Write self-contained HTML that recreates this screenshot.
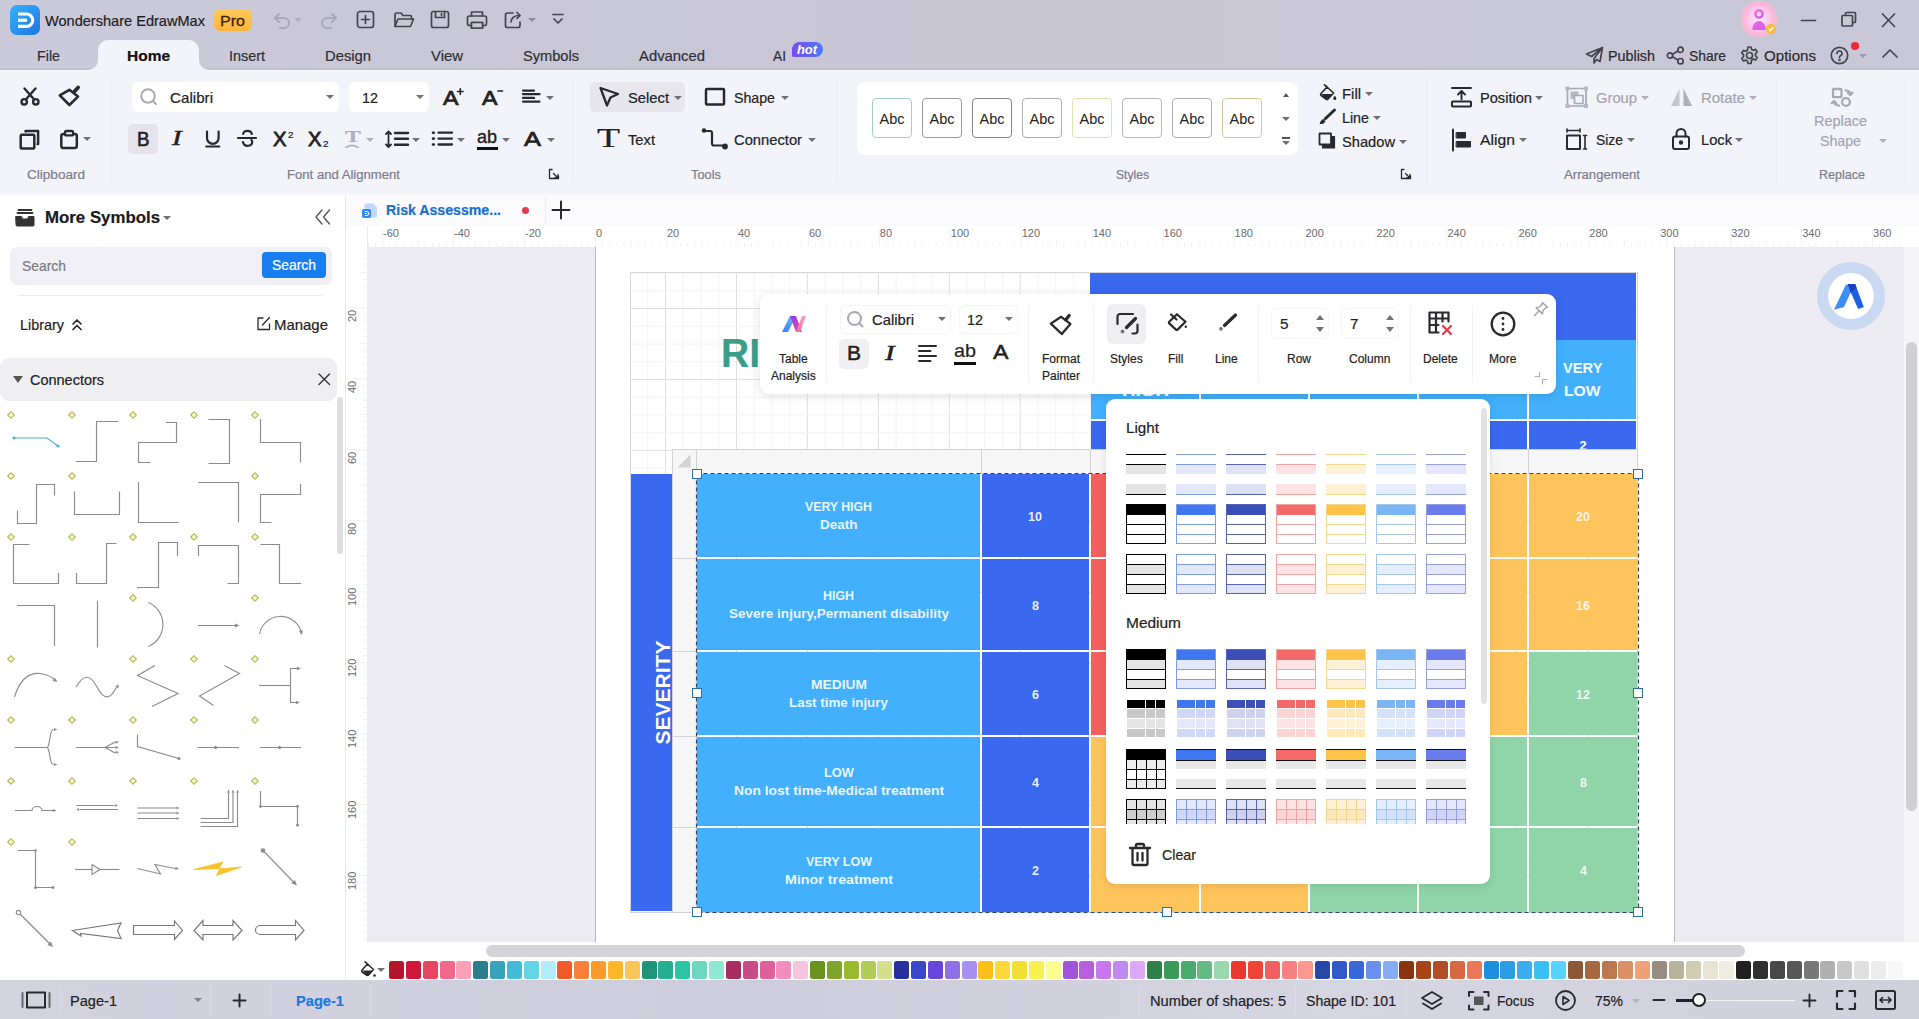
<!DOCTYPE html>
<html lang="en"><head><meta charset="utf-8"><title>Wondershare EdrawMax</title>
<style>
*{box-sizing:border-box;margin:0;padding:0}
html,body{width:1919px;height:1019px;overflow:hidden;background:#fff}
body{font-family:"Liberation Sans",sans-serif;color:#222;position:relative;font-size:15px}
.a{position:absolute}
.t{position:absolute;white-space:nowrap;line-height:1;transform-origin:0 50%;-webkit-text-stroke:0.2px currentColor}
svg{position:absolute;overflow:visible}
.ic{fill:none;stroke:#2a2a2e;stroke-width:2;stroke-linecap:round;stroke-linejoin:round}
.ict{fill:none;stroke:#45454e;stroke-width:1.7;stroke-linecap:round;stroke-linejoin:round}
.icg{fill:none;stroke:#a9a9b6;stroke-width:2;stroke-linecap:round;stroke-linejoin:round}
#titlebar{left:0;top:0;width:1919px;height:70px;background:linear-gradient(90deg,#cbcada 0%,#c8c6d4 45%,#c8c6d3 60%,#c9c8d8 100%)}
#ribbon{left:0;top:70px;width:1919px;height:123px;background:#f3f3fa}
#ribbonline{left:0;top:193px;width:1919px;height:2px;background:#f7f7fb}
#hometab{left:98px;top:40px;width:101px;height:30px;background:#f3f3fa;border-radius:10px 10px 0 0}
.gl{position:absolute;font-size:12.5px;color:#7d7d8a;white-space:nowrap;line-height:1}
.sep{position:absolute;width:1px;background:#e9e9f0}
.dd{position:absolute;width:0;height:0;border-left:4px solid transparent;border-right:4px solid transparent;border-top:4.5px solid #707078}
.ddg{border-top-color:#b0b0bc}
.wbox{position:absolute;background:#fff;border-radius:6px}
.abc{position:absolute;top:98px;width:40px;height:40px;border:1px solid #999;border-radius:4px;background:#fff;font-size:14.5px;text-align:center;line-height:41px;color:#222}
#leftpanel{left:0;top:195px;width:345px;height:786px;background:#fff}
#lpborder{left:345px;top:195px;width:1px;height:786px;background:#e6e6ec}
#doctabs{left:346px;top:195px;width:1573px;height:31px;background:#fbfbfd}
#ruler_h{left:346px;top:226px;width:1558px;height:21px;background:#fff}
#ruler_v{left:346px;top:247px;width:21px;height:694px;background:#fff}
#canvas{left:367px;top:247px;width:1537px;height:695px;background:#ebebf1;overflow:hidden}
#page{left:228px;top:0;width:1080px;height:695px;background:#fff;border-left:1px solid #b8b8c0;border-right:1px solid #b8b8c0}
#vscroll{left:1904px;top:247px;width:15px;height:695px;background:#f5f5f8}
#hscroll{left:346px;top:942px;width:1558px;height:17px;background:#fff}
#palette{left:346px;top:959px;width:1573px;height:21px;background:#fff}
#status{left:0;top:980px;width:1919px;height:39px;background:linear-gradient(90deg,#d3d3e0 0%,#cdcddb 40%,#d6d6e2 70%,#d0d0dd 100%)}
.sw{position:absolute;top:2px;width:15px;height:18px;border-radius:2.5px}
.rl{position:absolute;font-size:11px;color:#6c6c70;line-height:1;white-space:nowrap}
.cell{position:absolute;color:#fff;font-weight:bold;font-size:12.5px;text-align:center;line-height:18px;display:flex;align-items:center;justify-content:center}
.hd{position:absolute;width:10px;height:10px;background:#fff;border:1px solid #2b6ea8}
#ftb{left:760px;top:294px;width:796px;height:100px;background:#fff;border-radius:9px;box-shadow:0 2px 8px rgba(0,0,0,.12)}
#drop{left:1106px;top:399px;width:384px;height:485px;background:#fff;border-radius:9px;box-shadow:0 2px 8px rgba(0,0,0,.10);overflow:hidden}
.fl{position:absolute;font-size:12.5px;color:#222;text-align:center;line-height:17px;white-space:nowrap}
</style></head>
<body>
<div class="a" id="titlebar"></div><div class="a" id="ribbon"></div><div class="a" id="ribbonline"></div><div class="a" style="left:0;top:68px;width:1919px;height:2px;background:rgba(60,60,90,.05)"></div><div class="a" id="hometab"></div>
<svg style="left:88px;top:60px" width="10" height="10"><path d="M10 0V10H0A10 10 0 0 0 10 0Z" fill="#f3f3fa"/></svg>
<svg style="left:199px;top:60px" width="10" height="10"><path d="M0 0V10H10A10 10 0 0 1 0 0Z" fill="#f3f3fa"/></svg>
<div class="a" style="left:10px;top:5px;width:30px;height:30px;border-radius:7px;background:linear-gradient(135deg,#35b4fb,#1c74e6)"></div>
<svg class="" style="left:10px;top:5px" width="30" height="30" viewBox="0 0 30 30"><path d="M8 9H16.5A6.2 6.2 0 0 1 16.5 21.4H8" stroke="#fff" stroke-width="3.2" fill="none"/><path d="M8 15.2H17" stroke="#fff" stroke-width="3.2"/></svg>
<div class="t" style="left:45px;top:13.8px;font-size:14.5px;color:#1e1e24;height:14.5px;transform:scaleX(1.004);">Wondershare EdrawMax</div>
<div class="a" style="left:214px;top:9px;width:38px;height:22px;border-radius:6px;background:linear-gradient(180deg,#ffc95a,#ffb43a)"></div>
<div class="t" style="left:220px;top:12.5px;font-size:15px;color:#3a2508;height:15px;transform:scaleX(1.071);-webkit-text-stroke:0.3px #3a2508;">Pro</div>
<svg class="icg" style="left:272px;top:10px" width="20" height="20" viewBox="0 0 20 20"><path d="M7 4L3 8l4 4"/><path d="M3 8h9a5 5 0 0 1 0 10H8"/></svg>
<div class="dd ddg" style="left:294px;top:18px"></div>
<svg class="icg" style="left:319px;top:10px" width="20" height="20" viewBox="0 0 20 20"><path d="M13 4l4 4-4 4"/><path d="M17 8H8a5 5 0 0 0 0 10h4"/></svg>
<svg class="ict" style="left:356px;top:10px" width="20" height="20" viewBox="0 0 20 20"><rect x="1.5" y="1.5" width="16" height="16" rx="2.5"/><path d="M9.5 5.5v8M5.5 9.5h8"/></svg>
<svg class="ict" style="left:393px;top:10px" width="22" height="20" viewBox="0 0 22 20"><path d="M2 16V4.5A1.5 1.5 0 0 1 3.5 3H8l2 2.5h7A1.5 1.5 0 0 1 18.5 7V9"/><path d="M2 16.5L5 9h15.5l-3 7.5Z"/></svg>
<svg class="ict" style="left:430px;top:10px" width="20" height="20" viewBox="0 0 20 20"><rect x="1.5" y="1.5" width="17" height="16" rx="2"/><path d="M5.5 1.5v6h9v-6M11.5 3.5v2"/></svg>
<svg class="ict" style="left:466px;top:10px" width="22" height="20" viewBox="0 0 22 20"><rect x="1.5" y="6" width="19" height="9.5" rx="2"/><path d="M5.5 6V2h11v4M5.5 12.5h11v5.5h-11Z" /><path d="M5.5 12.5h11v5.5h-11Z" fill="#c9c8d8"/></svg>
<svg class="ict" style="left:503px;top:10px" width="22" height="20" viewBox="0 0 22 20"><path d="M10 3H4.5A2 2 0 0 0 2.5 5v10.5a2 2 0 0 0 2 2H15a2 2 0 0 0 2-2V12"/><path d="M8 12c.500-4 3.5-6.5 8.5-6.5"/><path d="M14 2.5l3 3-3 3"/></svg>
<div class="dd" style="left:528px;top:18px;border-top-color:#8c8c98"></div>
<svg class="ict" style="left:552px;top:13px" width="12" height="14" viewBox="0 0 12 14"><path d="M1 1.5h10"/><path d="M2 6l4 4 4-4"/></svg>
<div class="a" style="left:1741px;top:1px;width:36px;height:36px;border-radius:50%;background:radial-gradient(circle at 50% 50%,#ffeaf7 0%,#fcc4e8 45%,#fab4dc 62%,#f8c8b4 80%,#e6dcc0 92%,rgba(214,214,226,.5) 100%)"></div>
<svg class="" style="left:1741px;top:1px" width="36" height="36" viewBox="0 0 36 36"><defs><linearGradient id="gav" x1="0" y1="0" x2="1" y2="1"><stop offset="0" stop-color="#f66ad8"/><stop offset="1" stop-color="#c95cf0"/></linearGradient></defs><circle cx="18" cy="13" r="3.6" fill="none" stroke="url(#gav)" stroke-width="2.4"/><path d="M11.5 27.5a6.5 7.5 0 0 1 13 0v1.5h-13Z" fill="url(#gav)"/><circle cx="30" cy="28" r="5" fill="#f6bc3a"/><path d="M27.8 28l1.7 1.7 2.8-3.4" stroke="#fff" stroke-width="1.4" fill="none"/></svg>
<svg class="ict" style="left:1799px;top:10px" width="20" height="20" viewBox="0 0 20 20"><path d="M2.5 10.5h14"/></svg>
<svg class="ict" style="left:1840px;top:10px" width="20" height="20" viewBox="0 0 20 20"><rect x="2" y="5.5" width="10.5" height="10.5" rx="1"/><path d="M5.5 5V3.5a1 1 0 0 1 1-1h8a1 1 0 0 1 1 1v8a1 1 0 0 1-1 1h-1.5"/></svg>
<svg class="ict" style="left:1879px;top:10px" width="20" height="20" viewBox="0 0 20 20"><path d="M3.5 4l12 12.5M15.5 4L3.5 16.5"/></svg>
<div class="t" style="left:37px;top:47.5px;font-size:15px;color:#2e2e36;height:15px;transform:scaleX(0.952);">File</div>
<div class="t" style="left:127px;top:47.5px;font-size:15px;color:#111;height:15px;font-weight:bold;transform:scaleX(1.032);">Home</div>
<div class="t" style="left:229px;top:47.5px;font-size:15px;color:#2e2e36;height:15px;transform:scaleX(0.96);">Insert</div>
<div class="t" style="left:325px;top:47.5px;font-size:15px;color:#2e2e36;height:15px;transform:scaleX(0.985);">Design</div>
<div class="t" style="left:431px;top:47.5px;font-size:15px;color:#2e2e36;height:15px;transform:scaleX(0.992);">View</div>
<div class="t" style="left:523px;top:47.5px;font-size:15px;color:#2e2e36;height:15px;transform:scaleX(0.974);">Symbols</div>
<div class="t" style="left:639px;top:47.5px;font-size:15px;color:#2e2e36;height:15px;transform:scaleX(0.989);">Advanced</div>
<div class="t" style="left:773px;top:47.5px;font-size:15px;color:#2e2e36;height:15px;transform:scaleX(0.917);">AI</div>
<div class="a" style="left:792px;top:42px;width:31px;height:15px;border-radius:8px 8px 8px 2px;background:linear-gradient(90deg,#7b4cf2,#4a7af6)"></div>
<div class="t" style="left:797px;top:43.8px;font-size:12.5px;color:#fff;height:12.5px;font-weight:bold;font-style:italic;transform:scaleX(1.029);-webkit-text-stroke:0;">hot</div>
<svg class="ict" style="left:1585px;top:46px" width="19" height="19" viewBox="0 0 19 19"><path d="M17.5 1.5L1.5 8l5 2.5L17.5 1.5L9 12.5v4.5l2.5-3.5 3.5 2Z"/></svg>
<div class="t" style="left:1608px;top:47.5px;font-size:15px;color:#2a2a30;height:15px;transform:scaleX(0.955);">Publish</div>
<svg class="ict" style="left:1666px;top:46px" width="19" height="19" viewBox="0 0 19 19"><circle cx="4" cy="9.5" r="2.7"/><circle cx="14.5" cy="3.8" r="2.7"/><circle cx="14.5" cy="15.2" r="2.7"/><path d="M6.4 8.2l5.7-3.1M6.4 10.8l5.7 3.1"/></svg>
<div class="t" style="left:1689px;top:47.5px;font-size:15px;color:#2a2a30;height:15px;transform:scaleX(0.924);">Share</div>
<svg class="ict" style="left:1740px;top:46px" width="19" height="19" viewBox="0 0 19 19"><circle cx="9.5" cy="9.5" r="3"/><path d="M8 1h3l.600 2.4 1.7.900 2.3-.900 1.6 2.5-1.7 1.8v2l1.7 1.8-1.6 2.5-2.3-.9-1.7.9L11 17.5H8l-.600-2.5-1.7-.900-2.3.900-1.6-2.5 1.7-1.8v-2L1.8 6.9l1.6-2.5 2.3.900 1.7-.900Z"/></svg>
<div class="t" style="left:1764px;top:47.5px;font-size:15px;color:#2a2a30;height:15px;transform:scaleX(1.006);">Options</div>
<svg class="ict" style="left:1830px;top:46px" width="19" height="19" viewBox="0 0 19 19"><circle cx="9.5" cy="9.5" r="8.2"/><path d="M7 7.5a2.5 2.5 0 1 1 3.5 2.3c-.700.3-1 .800-1 1.5"/><circle cx="9.5" cy="13.8" r=".500"/></svg>
<div class="a" style="left:1851px;top:42px;width:7.5px;height:7.5px;border-radius:50%;background:#f0283c"></div>
<div class="dd" style="left:1858.5px;top:54px;border-top-color:#9a9aa8"></div>
<svg class="ict" style="left:1881px;top:48px" width="18" height="12" viewBox="0 0 18 12"><path d="M2 9l7-7 7 7"/></svg>
<div class="sep" style="left:110px;top:80px;height:103px"></div>
<div class="sep" style="left:572px;top:80px;height:103px"></div>
<div class="sep" style="left:836px;top:80px;height:103px"></div>
<div class="sep" style="left:1426px;top:80px;height:103px"></div>
<div class="sep" style="left:1776px;top:80px;height:103px"></div>
<div class="sep" style="left:1905px;top:80px;height:103px"></div>
<div class="t" style="left:27px;top:168.8px;font-size:12.5px;color:#7d7d8a;height:12.5px;transform:scaleX(1.084);">Clipboard</div>
<div class="t" style="left:287px;top:168.8px;font-size:12.5px;color:#7d7d8a;height:12.5px;transform:scaleX(1.049);">Font and Alignment</div>
<div class="t" style="left:691px;top:168.8px;font-size:12.5px;color:#7d7d8a;height:12.5px;transform:scaleX(1.028);">Tools</div>
<div class="t" style="left:1116px;top:168.8px;font-size:12.5px;color:#7d7d8a;height:12.5px;transform:scaleX(0.969);">Styles</div>
<div class="t" style="left:1564px;top:168.8px;font-size:12.5px;color:#7d7d8a;height:12.5px;transform:scaleX(1.052);">Arrangement</div>
<div class="t" style="left:1819px;top:168.8px;font-size:12.5px;color:#7d7d8a;height:12.5px;transform:scaleX(1.003);">Replace</div>
<svg class="ic" style="left:18px;top:85px" width="24" height="24" viewBox="0 0 24 24"><g stroke-width="2.4"><circle cx="6.2" cy="16.8" r="2.7"/><circle cx="17.8" cy="16.8" r="2.7"/><path d="M17.5 3.5L7.8 14.5M6.5 3.5L16.2 14.5"/></g></svg>
<svg class="ic" style="left:56px;top:85px" width="26" height="24" viewBox="0 0 26 24"><path d="M3.8 10.4L13.4 4.8L22 11.6L13.4 20Z" stroke-width="2.6"/><path d="M18.4 6.6l3.7-4.1" stroke-width="3.8"/></svg>
<svg class="ic" style="left:18px;top:127px" width="24" height="24" viewBox="0 0 24 24"><rect x="2.7" y="7.8" width="13.6" height="13.6" rx="1" stroke-width="2.5"/><path d="M7.6 4.5V4H20.1V17H19.6" stroke-width="2.5"/></svg>
<svg class="ic" style="left:58px;top:127px" width="24" height="24" viewBox="0 0 24 24"><rect x="3.3" y="7.1" width="15.5" height="14" rx="2" stroke-width="2.5"/><rect x="7" y="4" width="8.1" height="4.4" rx="1.5" stroke-width="2.3" fill="#f3f3fa"/></svg>
<div class="dd" style="left:83px;top:137px"></div>
<div class="wbox" style="left:132px;top:82px;width:207px;height:30px"></div>
<svg class="icg" style="left:139px;top:87px" width="20" height="20" viewBox="0 0 20 20"><circle cx="9" cy="9" r="6.8"/><path d="M14 14l3 3"/></svg>
<div class="t" style="left:170px;top:89.5px;font-size:15px;color:#222;height:15px;transform:scaleX(1.012);">Calibri</div>
<div class="dd" style="left:325.5px;top:95px"></div>
<div class="wbox" style="left:349px;top:82px;width:80px;height:30px"></div>
<div class="t" style="left:362px;top:89.5px;font-size:15px;color:#222;height:15px;transform:scaleX(0.959);">12</div>
<div class="dd" style="left:415.5px;top:95px"></div>
<div class="t" style="left:442.5px;top:87.5px;font-size:20px;color:#222;height:20px;transform:scaleX(1.162);-webkit-text-stroke:0.7px #222;">A</div>
<svg class="ic" style="left:456px;top:87px" width="8" height="8" viewBox="0 0 8 8"><path d="M4.3 1.8v5.4M1.6 4.5h5.4" stroke-width="1.7"/></svg>
<div class="t" style="left:482px;top:87.5px;font-size:20px;color:#222;height:20px;transform:scaleX(1.162);-webkit-text-stroke:0.7px #222;">A</div>
<svg class="ic" style="left:496px;top:87px" width="8" height="8" viewBox="0 0 8 8"><path d="M2 4h4.5" stroke-width="1.7"/></svg>
<svg class="ic" style="left:521px;top:88px" width="20" height="18" viewBox="0 0 20 18"><path d="M2 2.6h11M2 6.2h16.5M2 9.9h11M2 13.6h16.5" stroke-width="2.3"/></svg>
<div class="dd" style="left:545.5px;top:96px"></div>
<div class="a" style="left:128px;top:124px;width:30px;height:30px;border-radius:5px;background:#e4e4ea"></div>
<div class="t" style="left:136.5px;top:127.5px;font-size:21px;color:#222;height:21px;transform:scaleX(0.892);-webkit-text-stroke:0.6px #222;">B</div>
<div class="t" style="left:172px;top:128px;font-size:21px;color:#222;height:21px;font-style:italic;transform:scaleX(1.371);font-family:'Liberation Serif',serif;-webkit-text-stroke:0.5px #222;">I</div>
<svg class="ic" style="left:203px;top:128px" width="20" height="24" viewBox="0 0 20 24"><path d="M4 3.6v6.4a5.8 5.8 0 0 0 11.6 0V3.6M3.3 18.5h13" stroke-width="2.2"/></svg>
<svg class="ic" style="left:237px;top:128px" width="22" height="24" viewBox="0 0 22 24"><path d="M14.8 6c-.400-2-2-3.2-4.3-3.2-2.6 0-4.3 1.3-4.3 3.2M6 14c.400 2.5 2.2 3.8 4.7 3.8 2.6 0 4.5-1.5 4.5-3.7 0-.900-.300-1.6-.800-2.2M1 10h18" stroke-width="2.2"/></svg>
<div class="t" style="left:273px;top:129px;font-size:20px;color:#222;height:20px;transform:scaleX(1.012);-webkit-text-stroke:0.8px #222;">X</div>
<div class="t" style="left:287.5px;top:130.2px;font-size:9.5px;color:#222;height:9.5px;transform:scaleX(1.041);">2</div>
<div class="t" style="left:308px;top:129px;font-size:20px;color:#222;height:20px;transform:scaleX(1.012);-webkit-text-stroke:0.8px #222;">X</div>
<div class="t" style="left:323px;top:138.6px;font-size:9.5px;color:#222;height:9.5px;transform:scaleX(1.041);">2</div>
<div class="t" style="left:345px;top:127.8px;font-size:17.5px;color:#b0b0bc;height:17.5px;font-weight:bold;transform:scaleX(1.357);font-family:'Liberation Serif',serif;">T</div>
<svg class="" style="left:343px;top:144px" width="18" height="6" viewBox="0 0 18 6"><path d="M2.5 3.8Q9 -1 15.5 3.8" stroke="#b0b0bc" stroke-width="1.7" fill="none"/></svg>
<div class="dd ddg" style="left:366px;top:137.5px"></div>
<svg class="ic" style="left:384px;top:128px" width="26" height="24" viewBox="0 0 26 24"><path d="M4.5 3.5v15.5M2 6L4.5 3.5 7 6M2 16.5L4.5 19 7 16.5" stroke-width="1.8"/><path d="M11 5h13M11 10.8h13M11 16.8h13" stroke-width="2.4"/></svg>
<div class="dd" style="left:411.5px;top:137.5px"></div>
<svg class="ic" style="left:431px;top:129px" width="24" height="22" viewBox="0 0 24 22"><path d="M7.5 3.7h13.5M7.5 9.6h13.5M7.5 15.5h13.5" stroke-width="2.3"/><path d="M2 3.7h.800M2 9.6h.800M2 15.5h.800" stroke-width="2.6"/></svg>
<div class="dd" style="left:456.5px;top:137.5px"></div>
<div class="t" style="left:477px;top:127px;font-size:19px;color:#222;height:19px;transform:scaleX(0.946);-webkit-text-stroke:0.4px #222;">ab</div>
<div class="a" style="left:477px;top:147px;width:21px;height:3px;background:#111"></div>
<div class="dd" style="left:501.5px;top:137.5px"></div>
<div class="t" style="left:523.5px;top:127.5px;font-size:21px;color:#222;height:21px;transform:scaleX(1.214);-webkit-text-stroke:0.7px #222;">A</div>
<div class="dd" style="left:547px;top:137.5px"></div>
<svg class="ic" style="left:548px;top:168px" width="12" height="12" viewBox="0 0 12 12"><path d="M4 1.5H1.5v9h9V8" stroke-width="1.3"/><path d="M5.5 5.5l4.5 4.5M10 6.5v3.5h-3.5" stroke-width="1.3"/></svg>
<div class="a" style="left:590px;top:82px;width:95px;height:30px;border-radius:5px;background:#e6e6ec"></div>
<svg class="ic" style="left:597px;top:85px" width="24" height="24" viewBox="0 0 24 24"><path d="M3.5 3l17.5 6-7.5 3.5L10 20.5Z" stroke-width="2.3"/></svg>
<div class="t" style="left:628px;top:89.5px;font-size:15px;color:#222;height:15px;transform:scaleX(0.983);">Select</div>
<div class="dd" style="left:673.5px;top:95.5px"></div>
<svg class="ic" style="left:704px;top:87px" width="22" height="20" viewBox="0 0 22 20"><rect x="2" y="2" width="18" height="15.5" rx="1" stroke-width="2.5"/></svg>
<div class="t" style="left:734px;top:89.5px;font-size:15px;color:#222;height:15px;transform:scaleX(0.945);">Shape</div>
<div class="dd" style="left:780.5px;top:95.5px"></div>
<div class="t" style="left:597px;top:125px;font-size:27px;color:#222;height:27px;transform:scaleX(1.395);font-family:'Liberation Serif',serif;">T</div>
<div class="t" style="left:628px;top:131.5px;font-size:15px;color:#222;height:15px;transform:scaleX(0.981);">Text</div>
<svg class="ic" style="left:701px;top:127px" width="28" height="24" viewBox="0 0 28 24"><path d="M5.5 4h3.5a2 2 0 0 1 2 2v10.5a2 2 0 0 0 2 2H21" stroke-width="2.2"/><circle cx="3" cy="3.5" r="1.3" fill="#2a2a2e"/><circle cx="24" cy="19.5" r="1.9" fill="#2a2a2e"/></svg>
<div class="t" style="left:734px;top:131.5px;font-size:15px;color:#222;height:15px;transform:scaleX(0.983);">Connector</div>
<div class="dd" style="left:807.5px;top:137.5px"></div>
<div class="wbox" style="left:857px;top:82px;width:441px;height:73px;border-radius:8px"></div>
<div class="abc" style="left:872px;border-color:#a2cfc0">Abc</div>
<div class="abc" style="left:922px;border-color:#9c9c9c">Abc</div>
<div class="abc" style="left:972px;border-color:#868686">Abc</div>
<div class="abc" style="left:1022px;border-color:#acacac">Abc</div>
<div class="abc" style="left:1072px;border-color:#dfe3b4">Abc</div>
<div class="abc" style="left:1122px;border-color:#b8b8b8">Abc</div>
<div class="abc" style="left:1172px;border-color:#acacac">Abc</div>
<div class="abc" style="left:1222px;border-color:#d6c896">Abc</div>
<div class="a" style="left:1282.5px;top:93px;border-left:3.5px solid transparent;border-right:3.5px solid transparent;border-bottom:4.5px solid #555"></div>
<div class="dd" style="left:1282px;top:116.5px"></div>
<div class="a" style="left:1282px;top:137px;width:8px;height:1.5px;background:#555"></div>
<div class="dd" style="left:1282px;top:140.5px"></div>
<svg class="ic" style="left:1318px;top:84px" width="20" height="18" viewBox="0 0 20 18"><path d="M3 9.5l6-6.5 6.5 6-5.5 6a1.5 1.5 0 0 1-2 0L3.2 11.5a1.4 1.4 0 0 1-.200-2ZM9 3L6.5 .800" stroke-width="1.7"/><path d="M3.5 10h11.5l-5 5.5a1.5 1.5 0 0 1-2 0Z" fill="#2a2a2e" stroke="none"/><path d="M16.8 11.5c1 1.5 1.5 2.3 1.5 3a1.5 1.5 0 0 1-3 0c0-.700.5-1.5 1.5-3Z" fill="#2a2a2e" stroke="none"/></svg>
<div class="t" style="left:1342px;top:85.5px;font-size:15px;color:#222;height:15px;transform:scaleX(0.992);">Fill</div>
<div class="dd" style="left:1364.5px;top:91.5px"></div>
<svg class="ic" style="left:1318px;top:108px" width="20" height="18" viewBox="0 0 20 18"><path d="M16.5 2L7.5 10.5" stroke-width="3"/><path d="M5.5 11.5c-2 .300-2.5 2-3.5 4 2 .300 4.5 0 5-2.5Z" fill="#2a2a2e" stroke-width="1"/></svg>
<div class="t" style="left:1342px;top:109.5px;font-size:15px;color:#222;height:15px;transform:scaleX(0.952);">Line</div>
<div class="dd" style="left:1372.5px;top:115.5px"></div>
<svg class="ic" style="left:1318px;top:132px" width="20" height="18" viewBox="0 0 20 18"><rect x="4.5" y="4.5" width="12" height="11.5" fill="#2a2a2e" stroke-width="1.2"/><rect x="1.5" y="1.5" width="11.5" height="11" fill="#f3f3fa" stroke-width="1.8"/></svg>
<div class="t" style="left:1342px;top:133.5px;font-size:15px;color:#222;height:15px;transform:scaleX(0.978);">Shadow</div>
<div class="dd" style="left:1398.5px;top:139.5px"></div>
<svg class="ic" style="left:1400px;top:168px" width="12" height="12" viewBox="0 0 12 12"><path d="M4 1.5H1.5v9h9V8" stroke-width="1.3"/><path d="M5.5 5.5l4.5 4.5M10 6.5v3.5h-3.5" stroke-width="1.3"/></svg>
<svg class="ic" style="left:1450px;top:86px" width="24" height="22" viewBox="0 0 24 22"><path d="M2 2h19" stroke-width="2"/><path d="M11.5 5.5v8M8 8.5l3.5-3.5 3.5 3.5" stroke-width="1.9"/><rect x="2" y="15.5" width="19" height="5" rx=".800" stroke-width="2"/></svg>
<div class="t" style="left:1480px;top:89.5px;font-size:15px;color:#222;height:15px;transform:scaleX(0.974);">Position</div>
<div class="dd" style="left:1534.5px;top:95.5px"></div>
<svg class="icg" style="left:1565px;top:86px" width="24" height="22" viewBox="0 0 24 22"><rect x="2.5" y="2.5" width="18.5" height="17.5" rx="1" stroke-width="1.7"/><rect x="5.5" y="5.5" width="8" height="7.5" fill="#b8b8c4" stroke="none"/><rect x="9.5" y="9.5" width="8.5" height="8" stroke-width="1.6" fill="#f3f3fa"/><rect x=".500" y=".500" width="4" height="4" fill="#b8b8c4" stroke="none"/><rect x="19" y=".500" width="4" height="4" fill="#b8b8c4" stroke="none"/><rect x=".500" y="18" width="4" height="4" fill="#b8b8c4" stroke="none"/><rect x="19" y="18" width="4" height="4" fill="#b8b8c4" stroke="none"/></svg>
<div class="t" style="left:1596px;top:89.5px;font-size:15px;color:#a4a4b0;height:15px;transform:scaleX(0.983);">Group</div>
<div class="dd ddg" style="left:1640.5px;top:95.5px"></div>
<svg class="icg" style="left:1670px;top:86px" width="24" height="22" viewBox="0 0 24 22"><path d="M9.5 2.5v17.5H1Z" fill="#c6c6d0" stroke="none"/><path d="M13.5 2.5v17.5H22Z" fill="#b0b0bc" stroke="none"/></svg>
<div class="t" style="left:1701px;top:89.5px;font-size:15px;color:#a4a4b0;height:15px;transform:scaleX(0.996);">Rotate</div>
<div class="dd ddg" style="left:1748.5px;top:95.5px"></div>
<svg class="ic" style="left:1450px;top:128px" width="24" height="24" viewBox="0 0 24 24"><path d="M3 1.5v21" stroke-width="2"/><rect x="6.5" y="4.5" width="9" height="5.5" fill="#2a2a2e" stroke-width="1"/><rect x="6.5" y="13.5" width="14" height="5.5" fill="#2a2a2e" stroke-width="1"/></svg>
<div class="t" style="left:1480px;top:131.5px;font-size:15px;color:#222;height:15px;transform:scaleX(1.049);">Align</div>
<div class="dd" style="left:1518.5px;top:137.5px"></div>
<svg class="ic" style="left:1565px;top:128px" width="24" height="24" viewBox="0 0 24 24"><rect x="2" y="7.5" width="13" height="13.5" stroke-width="2"/><path d="M2 2.5h13M2 1v3M15 1v3M20 7.5v13.5M18.5 7.5h3M18.5 21h3" stroke-width="1.6"/></svg>
<div class="t" style="left:1596px;top:131.5px;font-size:15px;color:#222;height:15px;transform:scaleX(0.925);">Size</div>
<div class="dd" style="left:1626.5px;top:137.5px"></div>
<svg class="ic" style="left:1670px;top:127px" width="24" height="24" viewBox="0 0 24 24"><rect x="3" y="9.5" width="16" height="12.5" rx="2" stroke-width="2"/><path d="M6.5 9.5V6.5a4.5 4.5 0 0 1 9 0v3" stroke-width="2"/><circle cx="11" cy="15.5" r="1.2" fill="#2a2a2e"/></svg>
<div class="t" style="left:1701px;top:131.5px;font-size:15px;color:#222;height:15px;transform:scaleX(0.978);">Lock</div>
<div class="dd" style="left:1734.5px;top:137.5px"></div>
<svg class="icg" style="left:1830px;top:87px" width="24" height="22" viewBox="0 0 24 22"><g stroke-width="2.3"><rect x="3" y="2" width="8.5" height="8.2" rx=".800"/><circle cx="16" cy="15" r="3.9"/><path d="M15.5 3.3q4.5 .200 5 4.5M18 6l2.5 2 2-2.4"/><path d="M9 18.7q-4.5-.200-5-4.5M1.8 16.2l2.2-2.2 2.3 2"/></g></svg>
<div class="t" style="left:1814px;top:112.5px;font-size:15px;color:#a4a4b0;height:15px;transform:scaleX(0.963);">Replace</div>
<div class="t" style="left:1820px;top:132.5px;font-size:15px;color:#a4a4b0;height:15px;transform:scaleX(0.945);">Shape</div>
<div class="dd ddg" style="left:1878.5px;top:138.5px"></div>
<div class="a" id="leftpanel"></div><div class="a" id="lpborder"></div>
<svg class="ic" style="left:15px;top:208px" width="20" height="20" viewBox="0 0 20 20"><path d="M3.5 2h13M2.5 5h15" stroke-width="1.8" stroke="#333"/><path d="M1 8.5h5.5l1 2.5h5l1-2.5H19V17a1 1 0 0 1-1 1H2a1 1 0 0 1-1-1Z" fill="#333" stroke="#333" stroke-width="1"/></svg>
<div class="t" style="left:45px;top:208.5px;font-size:17px;color:#1a1a1a;height:17px;font-weight:bold;transform:scaleX(0.99);">More Symbols</div>
<div class="dd" style="left:163px;top:215.5px"></div>
<svg class="ic" style="left:314px;top:208px" width="18" height="18" viewBox="0 0 18 18"><path d="M8 2L2 9l6 7M15.5 2l-6 7 6 7" stroke="#555" stroke-width="1.4"/></svg>
<div class="a" style="left:10px;top:247px;width:322px;height:38px;border-radius:7px;background:#f0f0f6"></div>
<div class="t" style="left:22px;top:257.5px;font-size:15px;color:#7a7a84;height:15px;transform:scaleX(0.926);">Search</div>
<div class="a" style="left:262px;top:252px;width:64px;height:26px;border-radius:4px;background:#1a7df0"></div>
<div class="t" style="left:272px;top:257px;font-size:15px;color:#fff;height:15px;transform:scaleX(0.926);">Search</div>
<div class="a" style="left:18px;top:295px;width:304px;height:1px;background:#ececf0"></div>
<div class="t" style="left:20px;top:316.5px;font-size:15px;color:#222;height:15px;transform:scaleX(0.96);">Library</div>
<svg class="ic" style="left:71px;top:318px" width="12" height="13" viewBox="0 0 12 13"><path d="M2 6l4-4 4 4M2 11.5l4-4 4 4" stroke-width="1.7"/></svg>
<svg class="ic" style="left:256px;top:316px" width="15" height="15" viewBox="0 0 15 15"><path d="M7 2H2v11.5h11.5V8" stroke-width="1.3"/><path d="M6.5 9L13.5 1.5" stroke-width="1.3"/></svg>
<div class="t" style="left:274px;top:316.5px;font-size:15px;color:#222;height:15px;transform:scaleX(0.996);">Manage</div>
<div class="a" style="left:0;top:358px;width:337px;height:43px;border-radius:9px;background:#efeff1"></div>
<div class="a" style="left:12.5px;top:375.5px;border-left:5.5px solid transparent;border-right:5.5px solid transparent;border-top:7px solid #555"></div>
<div class="t" style="left:30px;top:371.5px;font-size:15px;color:#222;height:15px;transform:scaleX(0.965);">Connectors</div>
<svg class="ic" style="left:317px;top:372px" width="14" height="14" viewBox="0 0 14 14"><path d="M2 2l10.5 10.5M12.5 2L2 12.5" stroke-width="1.4" stroke="#333"/></svg>
<div class="a" style="left:337px;top:397px;width:6px;height:157px;border-radius:3px;background:#dedee2"></div>
<svg style="left:0;top:195px" width="345" height="786" viewBox="0 195 345 786" fill="none" stroke="#8c8c8c" stroke-width="1.15" stroke-linejoin="miter"><path d="M7.7 415L11 411.7L14.3 415L11 418.3Z" fill="#f6f6c8" stroke="#b4b650" stroke-width="1.1"/><path d="M68.7 415L72 411.7L75.3 415L72 418.3Z" fill="#f6f6c8" stroke="#b4b650" stroke-width="1.1"/><path d="M129.7 415L133 411.7L136.3 415L133 418.3Z" fill="#f6f6c8" stroke="#b4b650" stroke-width="1.1"/><path d="M190.7 415L194 411.7L197.3 415L194 418.3Z" fill="#f6f6c8" stroke="#b4b650" stroke-width="1.1"/><path d="M251.7 415L255 411.7L258.3 415L255 418.3Z" fill="#f6f6c8" stroke="#b4b650" stroke-width="1.1"/><path d="M7.7 476L11 472.7L14.3 476L11 479.3Z" fill="#f6f6c8" stroke="#b4b650" stroke-width="1.1"/><path d="M68.7 476L72 472.7L75.3 476L72 479.3Z" fill="#f6f6c8" stroke="#b4b650" stroke-width="1.1"/><path d="M251.7 476L255 472.7L258.3 476L255 479.3Z" fill="#f6f6c8" stroke="#b4b650" stroke-width="1.1"/><path d="M7.7 537L11 533.7L14.3 537L11 540.3Z" fill="#f6f6c8" stroke="#b4b650" stroke-width="1.1"/><path d="M68.7 537L72 533.7L75.3 537L72 540.3Z" fill="#f6f6c8" stroke="#b4b650" stroke-width="1.1"/><path d="M129.7 537L133 533.7L136.3 537L133 540.3Z" fill="#f6f6c8" stroke="#b4b650" stroke-width="1.1"/><path d="M190.7 537L194 533.7L197.3 537L194 540.3Z" fill="#f6f6c8" stroke="#b4b650" stroke-width="1.1"/><path d="M251.7 537L255 533.7L258.3 537L255 540.3Z" fill="#f6f6c8" stroke="#b4b650" stroke-width="1.1"/><path d="M129.7 598L133 594.7L136.3 598L133 601.3Z" fill="#f6f6c8" stroke="#b4b650" stroke-width="1.1"/><path d="M251.7 598L255 594.7L258.3 598L255 601.3Z" fill="#f6f6c8" stroke="#b4b650" stroke-width="1.1"/><path d="M7.7 659L11 655.7L14.3 659L11 662.3Z" fill="#f6f6c8" stroke="#b4b650" stroke-width="1.1"/><path d="M129.7 659L133 655.7L136.3 659L133 662.3Z" fill="#f6f6c8" stroke="#b4b650" stroke-width="1.1"/><path d="M190.7 659L194 655.7L197.3 659L194 662.3Z" fill="#f6f6c8" stroke="#b4b650" stroke-width="1.1"/><path d="M251.7 659L255 655.7L258.3 659L255 662.3Z" fill="#f6f6c8" stroke="#b4b650" stroke-width="1.1"/><path d="M7.7 720L11 716.7L14.3 720L11 723.3Z" fill="#f6f6c8" stroke="#b4b650" stroke-width="1.1"/><path d="M68.7 720L72 716.7L75.3 720L72 723.3Z" fill="#f6f6c8" stroke="#b4b650" stroke-width="1.1"/><path d="M129.7 720L133 716.7L136.3 720L133 723.3Z" fill="#f6f6c8" stroke="#b4b650" stroke-width="1.1"/><path d="M190.7 720L194 716.7L197.3 720L194 723.3Z" fill="#f6f6c8" stroke="#b4b650" stroke-width="1.1"/><path d="M251.7 720L255 716.7L258.3 720L255 723.3Z" fill="#f6f6c8" stroke="#b4b650" stroke-width="1.1"/><path d="M7.7 781L11 777.7L14.3 781L11 784.3Z" fill="#f6f6c8" stroke="#b4b650" stroke-width="1.1"/><path d="M68.7 781L72 777.7L75.3 781L72 784.3Z" fill="#f6f6c8" stroke="#b4b650" stroke-width="1.1"/><path d="M129.7 781L133 777.7L136.3 781L133 784.3Z" fill="#f6f6c8" stroke="#b4b650" stroke-width="1.1"/><path d="M190.7 781L194 777.7L197.3 781L194 784.3Z" fill="#f6f6c8" stroke="#b4b650" stroke-width="1.1"/><path d="M251.7 781L255 777.7L258.3 781L255 784.3Z" fill="#f6f6c8" stroke="#b4b650" stroke-width="1.1"/><path d="M7.7 842L11 838.7L14.3 842L11 845.3Z" fill="#f6f6c8" stroke="#b4b650" stroke-width="1.1"/><path d="M68.7 842L72 838.7L75.3 842L72 845.3Z" fill="#f6f6c8" stroke="#b4b650" stroke-width="1.1"/><path d="M14 438 L47 438 L58 446" stroke="#4ab0d8"/><circle cx="14" cy="438" r="1.6" fill="#4ab0d8" stroke="none"/><circle cx="58" cy="446" r="1.6" fill="#4ab0d8" stroke="none"/><path d="M76 461.5 L96.5 461.5 L96.5 421.5 L118 421.5" /><path d="M166 422.5 L176.5 422.5 L176.5 442.5 L138.5 442.5 L138.5 462.5 L150.5 462.5" /><path d="M208.5 419.5 L229.5 419.5 L229.5 463.5 L208.5 463.5" /><path d="M260.5 419 L260.5 442.5 L300.5 442.5 L300.5 462.5" /><path d="M17.5 510.5 L17.5 523.5 L36.5 523.5 L36.5 484.5 L54.5 484.5 L54.5 495.5" /><path d="M74.5 491.5 L74.5 514.5 L119.5 514.5 L119.5 491.5" /><path d="M138.5 482 L138.5 522.5 L179 522.5" /><path d="M198.5 482.5 L238.5 482.5 L238.5 522.5" /><path d="M300.5 484 L300.5 494.5 L260.5 494.5 L260.5 522.5 L271.5 522.5" /><path d="M29.5 544.5 L13.5 544.5 L13.5 583.5 L58.5 583.5 L58.5 573" /><path d="M76.5 573 L76.5 583.5 L106.5 583.5 L106.5 543.5 L116.5 543.5" /><path d="M137 587.5 L158.5 587.5 L158.5 542.5 L177.5 542.5 L177.5 556" /><path d="M198.5 556 L198.5 545.5 L238.5 545.5 L238.5 583.5 L227.5 583.5" /><path d="M260.5 544.5 L279.5 544.5 L279.5 583.5 L301 583.5" /><path d="M17 605.5 L54.5 605.5 L54.5 646" /><path d="M97.5 601 L97.5 647.5" /><path d="M148.5 602.5A24 24 0 0 1 148.5 646.5"/><path d="M198 625.5 L236 625.5" /><path d="M239.5 625.5L234.9 627.5L234.9 623.5Z" fill="#8c8c8c" stroke="none"/><path d="M259.5 634A21.5 21.5 0 0 1 301 631"/><path d="M302 635L298.8 631.1L302.8 630.1Z" fill="#8c8c8c" stroke="none"/><path d="M14.5 697Q22 672 40 673.5Q50 675 55 680"/><path d="M57.5 682L52.6 681.1L54.9 677.7Z" fill="#8c8c8c" stroke="none"/><path d="M76 687C84 674 90 674 97 687C104 700 110 700 116 688"/><path d="M118.5 684L118.4 688.5L115.1 686.9Z" fill="#8c8c8c" stroke="none"/><path d="M155 665.5 L137.5 675.5 L178 693.5 L152 706.5" /><path d="M224.5 665.5 L239.5 673.5 L199.5 696 L213.5 705.5" /><path d="M259 685.5 L290.5 685.5" /><path d="M297 668.5 L290.5 668.5 L290.5 702.5 L296 702.5" /><path d="M301 668.5L296.9 670.3L296.9 666.7Z" fill="#8c8c8c" stroke="none"/><path d="M300 702.5L295.9 704.3L295.9 700.7Z" fill="#8c8c8c" stroke="none"/><path d="M14.5 747.5 L47.5 747.5" /><path d="M47.5 747.5C51 742 49 730 53.5 729.5M47.5 747.5C51 753 49 764.5 53.5 764.5"/><path d="M57.5 729.5L53.8 731.1L53.8 727.9Z" fill="#8c8c8c" stroke="none"/><path d="M57.5 764.5L53.8 766.1L53.8 762.9Z" fill="#8c8c8c" stroke="none"/><path d="M76 747.5 L115 747.5" /><path d="M105 747.5 L115 742" /><path d="M105 747.5 L115 753" /><path d="M119 741.5L115.9 744L115 740.9Z" fill="#8c8c8c" stroke="none"/><path d="M119 747.5L115.3 749.1L115.3 745.9Z" fill="#8c8c8c" stroke="none"/><path d="M119 753L115 753.6L115.9 750.5Z" fill="#8c8c8c" stroke="none"/><path d="M137.5 734.5 L137.5 746.5 L179 758.5" /><circle cx="179" cy="758.5" r="1.5" fill="#8c8c8c" stroke="none"/><path d="M197.5 747.5 L239 747.5" /><path d="M219 747.5L214.4 749.5L214.4 745.5Z" fill="#8c8c8c" stroke="none"/><path d="M260 747.5 L301 747.5" /><path d="M283 747.5L278.4 749.5L278.4 745.5Z" fill="#8c8c8c" stroke="none"/><path d="M15 810.5H32A5 4 0 0 1 42 810.5H53"/><path d="M56.5 810.5L52.8 812.1L52.8 808.9Z" fill="#8c8c8c" stroke="none"/><path d="M76.5 805.5 L114 805.5" /><path d="M80 809.5 L118 809.5" /><path d="M118 805.5L114.8 806.9L114.8 804.1Z" fill="#8c8c8c" stroke="none"/><path d="M76 809.5L79.2 808.1L79.2 810.9Z" fill="#8c8c8c" stroke="none"/><path d="M137.5 808 L176 808" /><path d="M179.5 808L176.3 809.4L176.3 806.6Z" fill="#8c8c8c" stroke="none"/><path d="M137.5 813 L176 813" /><path d="M179.5 813L176.3 814.4L176.3 811.6Z" fill="#8c8c8c" stroke="none"/><path d="M137.5 818.5 L176 818.5" /><path d="M179.5 818.5L176.3 819.9L176.3 817.1Z" fill="#8c8c8c" stroke="none"/><path d="M200.5 818.5 L228.5 818.5 L228.5 793" /><path d="M228.5 789.5L229.9 792.7L227.1 792.7Z" fill="#8c8c8c" stroke="none"/><path d="M200.5 822.5 L233 822.5 L233 793" /><path d="M233 789.5L234.4 792.7L231.6 792.7Z" fill="#8c8c8c" stroke="none"/><path d="M200.5 826.5 L237.5 826.5 L237.5 793" /><path d="M237.5 789.5L238.9 792.7L236.1 792.7Z" fill="#8c8c8c" stroke="none"/><path d="M260.5 791 L260.5 806.5 L297.5 806.5 L297.5 825" /><circle cx="260.5" cy="806.5" r="1.4" fill="#8c8c8c" stroke="none"/><circle cx="297.5" cy="806.5" r="1.4" fill="#8c8c8c" stroke="none"/><circle cx="297.5" cy="825" r="1.5" fill="#8c8c8c" stroke="none"/><path d="M18 850.5 L35.5 850.5 L35.5 887.5 L53 887.5" /><circle cx="35.5" cy="850.5" r="1.3" fill="#8c8c8c" stroke="none"/><circle cx="35.5" cy="887.5" r="1.5" fill="#8c8c8c" stroke="none"/><circle cx="53" cy="887.5" r="1.5" fill="#8c8c8c" stroke="none"/><path d="M75 869.5 L92 869.5" /><path d="M100 869.5 L119.5 869.5" /><path d="M92 864.5 L92 874.5 L100 869.5 L92 864.5" /><path d="M137.5 868.5 L160.5 874 L155 864.5 L175.5 868.5" /><path d="M179 869L175.1 870L175.7 866.8Z" fill="#8c8c8c" stroke="none"/><path d="M193.5 869.5L223 862L218.5 869L241.5 867L216.5 875.5L220 868.5Z" fill="#f8c22c" stroke="#f8c22c" stroke-width=".800"/><path d="M263.5 851 L294 882.5" /><circle cx="263" cy="850.5" r="2.3" fill="#8c8c8c" stroke="none"/><path d="M297 885.5L291.4 883.3L295 879.9Z" fill="#8c8c8c" stroke="none"/><path d="M20 914 L50 944" /><circle cx="18.5" cy="912.5" r="2.2" fill="#fff"/><path d="M53 947L47.4 944.9L50.9 941.4Z" fill="#8c8c8c" stroke="none"/><path d="M72.5 930.5L121 923L117.5 930.5L121 938.5L80.5 933.5L81 936Z" fill="#fff" stroke="#777"/><path d="M133.5 925.5H174.5V921L182.5 930.5L174.5 939.5V934.5H133.5Z" fill="#fff" stroke="#777"/><path d="M194 930.5L203 920.5V925.5H233V920.5L242 930.5L233 940V934.5H203V940Z" fill="#fff" stroke="#777"/><path d="M260 925.5H295.5V920.5L304 930.5L295.5 940V934.5H260A4.5 4.5 0 0 1 260 925.5Z" fill="#fff" stroke="#777"/></svg>
<div class="a" id="doctabs"></div>
<svg class="" style="left:361px;top:202px" width="18" height="18" viewBox="0 0 18 18"><path d="M5 1.5h7l4 4V14a1.5 1.5 0 0 1-1.5 1.5H5A1.5 1.5 0 0 1 3.5 14V3A1.5 1.5 0 0 1 5 1.5Z" fill="#c4d6fa" stroke="none"/><rect x="1" y="7" width="9" height="9" rx="2" fill="#2e8af5" stroke="none"/><path d="M3.8 9.5h2a2 2 0 0 1 0 4h-2M3.8 11.5H6" stroke="#fff" stroke-width="1" fill="none"/></svg>
<div class="t" style="left:386px;top:202.8px;font-size:14.5px;color:#1a6ed2;height:14.5px;font-weight:bold;transform:scaleX(0.975);">Risk Assessme...</div>
<div class="a" style="left:521.5px;top:207px;width:7px;height:7px;border-radius:50%;background:#e8364c"></div>
<div class="a" style="left:545px;top:196px;width:1px;height:29px;background:#ececf2"></div>
<svg class="ic" style="left:551px;top:200px" width="20" height="20" viewBox="0 0 20 20"><path d="M10 1.5v17M1.5 10h17" stroke-width="2"/></svg>
<div class="a" id="ruler_h"></div><div class="a" id="ruler_v"></div>
<svg style="left:346px;top:226px" width="1558" height="21" viewBox="346 226 1558 21" stroke="#f2f2f6" stroke-width="1"><path d="M368.5 243V247"/><path d="M375.6 243V247"/><path d="M382.6 229V247"/><path d="M389.7 243V247"/><path d="M396.8 243V247"/><path d="M403.9 243V247"/><path d="M411 243V247"/><path d="M418.1 240V247"/><path d="M425.2 243V247"/><path d="M432.3 243V247"/><path d="M439.4 243V247"/><path d="M446.5 243V247"/><path d="M453.6 229V247"/><path d="M460.7 243V247"/><path d="M467.8 243V247"/><path d="M474.9 243V247"/><path d="M482 243V247"/><path d="M489.1 240V247"/><path d="M496.2 243V247"/><path d="M503.3 243V247"/><path d="M510.4 243V247"/><path d="M517.5 243V247"/><path d="M524.5 229V247"/><path d="M531.6 243V247"/><path d="M538.7 243V247"/><path d="M545.8 243V247"/><path d="M552.9 243V247"/><path d="M560 240V247"/><path d="M567.1 243V247"/><path d="M574.2 243V247"/><path d="M581.3 243V247"/><path d="M588.4 243V247"/><path d="M595.5 229V247"/><path d="M602.6 243V247"/><path d="M609.7 243V247"/><path d="M616.8 243V247"/><path d="M623.9 243V247"/><path d="M631 240V247"/><path d="M638.1 243V247"/><path d="M645.2 243V247"/><path d="M652.3 243V247"/><path d="M659.4 243V247"/><path d="M666.5 229V247"/><path d="M673.5 243V247"/><path d="M680.6 243V247"/><path d="M687.7 243V247"/><path d="M694.8 243V247"/><path d="M701.9 240V247"/><path d="M709 243V247"/><path d="M716.1 243V247"/><path d="M723.2 243V247"/><path d="M730.3 243V247"/><path d="M737.4 229V247"/><path d="M744.5 243V247"/><path d="M751.6 243V247"/><path d="M758.7 243V247"/><path d="M765.8 243V247"/><path d="M772.9 240V247"/><path d="M780 243V247"/><path d="M787.1 243V247"/><path d="M794.2 243V247"/><path d="M801.3 243V247"/><path d="M808.4 229V247"/><path d="M815.4 243V247"/><path d="M822.5 243V247"/><path d="M829.6 243V247"/><path d="M836.7 243V247"/><path d="M843.8 240V247"/><path d="M850.9 243V247"/><path d="M858 243V247"/><path d="M865.1 243V247"/><path d="M872.2 243V247"/><path d="M879.3 229V247"/><path d="M886.4 243V247"/><path d="M893.5 243V247"/><path d="M900.6 243V247"/><path d="M907.7 243V247"/><path d="M914.8 240V247"/><path d="M921.9 243V247"/><path d="M929 243V247"/><path d="M936.1 243V247"/><path d="M943.2 243V247"/><path d="M950.2 229V247"/><path d="M957.3 243V247"/><path d="M964.4 243V247"/><path d="M971.5 243V247"/><path d="M978.6 243V247"/><path d="M985.7 240V247"/><path d="M992.8 243V247"/><path d="M999.9 243V247"/><path d="M1007 243V247"/><path d="M1014.1 243V247"/><path d="M1021.2 229V247"/><path d="M1028.3 243V247"/><path d="M1035.4 243V247"/><path d="M1042.5 243V247"/><path d="M1049.6 243V247"/><path d="M1056.7 240V247"/><path d="M1063.8 243V247"/><path d="M1070.9 243V247"/><path d="M1078 243V247"/><path d="M1085.1 243V247"/><path d="M1092.2 229V247"/><path d="M1099.2 243V247"/><path d="M1106.3 243V247"/><path d="M1113.4 243V247"/><path d="M1120.5 243V247"/><path d="M1127.6 240V247"/><path d="M1134.7 243V247"/><path d="M1141.8 243V247"/><path d="M1148.9 243V247"/><path d="M1156 243V247"/><path d="M1163.1 229V247"/><path d="M1170.2 243V247"/><path d="M1177.3 243V247"/><path d="M1184.4 243V247"/><path d="M1191.5 243V247"/><path d="M1198.6 240V247"/><path d="M1205.7 243V247"/><path d="M1212.8 243V247"/><path d="M1219.9 243V247"/><path d="M1227 243V247"/><path d="M1234.1 229V247"/><path d="M1241.1 243V247"/><path d="M1248.2 243V247"/><path d="M1255.3 243V247"/><path d="M1262.4 243V247"/><path d="M1269.5 240V247"/><path d="M1276.6 243V247"/><path d="M1283.7 243V247"/><path d="M1290.8 243V247"/><path d="M1297.9 243V247"/><path d="M1305 229V247"/><path d="M1312.1 243V247"/><path d="M1319.2 243V247"/><path d="M1326.3 243V247"/><path d="M1333.4 243V247"/><path d="M1340.5 240V247"/><path d="M1347.6 243V247"/><path d="M1354.7 243V247"/><path d="M1361.8 243V247"/><path d="M1368.9 243V247"/><path d="M1376 229V247"/><path d="M1383 243V247"/><path d="M1390.1 243V247"/><path d="M1397.2 243V247"/><path d="M1404.3 243V247"/><path d="M1411.4 240V247"/><path d="M1418.5 243V247"/><path d="M1425.6 243V247"/><path d="M1432.7 243V247"/><path d="M1439.8 243V247"/><path d="M1446.9 229V247"/><path d="M1454 243V247"/><path d="M1461.1 243V247"/><path d="M1468.2 243V247"/><path d="M1475.3 243V247"/><path d="M1482.4 240V247"/><path d="M1489.5 243V247"/><path d="M1496.6 243V247"/><path d="M1503.7 243V247"/><path d="M1510.8 243V247"/><path d="M1517.9 229V247"/><path d="M1524.9 243V247"/><path d="M1532 243V247"/><path d="M1539.1 243V247"/><path d="M1546.2 243V247"/><path d="M1553.3 240V247"/><path d="M1560.4 243V247"/><path d="M1567.5 243V247"/><path d="M1574.6 243V247"/><path d="M1581.7 243V247"/><path d="M1588.8 229V247"/><path d="M1595.9 243V247"/><path d="M1603 243V247"/><path d="M1610.1 243V247"/><path d="M1617.2 243V247"/><path d="M1624.3 240V247"/><path d="M1631.4 243V247"/><path d="M1638.5 243V247"/><path d="M1645.6 243V247"/><path d="M1652.7 243V247"/><path d="M1659.8 229V247"/><path d="M1666.8 243V247"/><path d="M1673.9 243V247"/><path d="M1681 243V247"/><path d="M1688.1 243V247"/><path d="M1695.2 240V247"/><path d="M1702.3 243V247"/><path d="M1709.4 243V247"/><path d="M1716.5 243V247"/><path d="M1723.6 243V247"/><path d="M1730.7 229V247"/><path d="M1737.8 243V247"/><path d="M1744.9 243V247"/><path d="M1752 243V247"/><path d="M1759.1 243V247"/><path d="M1766.2 240V247"/><path d="M1773.3 243V247"/><path d="M1780.4 243V247"/><path d="M1787.5 243V247"/><path d="M1794.6 243V247"/><path d="M1801.7 229V247"/><path d="M1808.7 243V247"/><path d="M1815.8 243V247"/><path d="M1822.9 243V247"/><path d="M1830 243V247"/><path d="M1837.1 240V247"/><path d="M1844.2 243V247"/><path d="M1851.3 243V247"/><path d="M1858.4 243V247"/><path d="M1865.5 243V247"/><path d="M1872.6 229V247"/><path d="M1879.7 243V247"/><path d="M1886.8 243V247"/><path d="M1893.9 243V247"/><path d="M1901 243V247"/><path d="M367.5 226V247" stroke="#e8e8ee"/></svg>
<div class="rl" style="left:383.1px;top:228px">-60</div>
<div class="rl" style="left:454.1px;top:228px">-40</div>
<div class="rl" style="left:525px;top:228px">-20</div>
<div class="rl" style="left:596px;top:228px">0</div>
<div class="rl" style="left:667px;top:228px">20</div>
<div class="rl" style="left:737.9px;top:228px">40</div>
<div class="rl" style="left:808.9px;top:228px">60</div>
<div class="rl" style="left:879.8px;top:228px">80</div>
<div class="rl" style="left:950.8px;top:228px">100</div>
<div class="rl" style="left:1021.7px;top:228px">120</div>
<div class="rl" style="left:1092.7px;top:228px">140</div>
<div class="rl" style="left:1163.6px;top:228px">160</div>
<div class="rl" style="left:1234.6px;top:228px">180</div>
<div class="rl" style="left:1305.5px;top:228px">200</div>
<div class="rl" style="left:1376.5px;top:228px">220</div>
<div class="rl" style="left:1447.4px;top:228px">240</div>
<div class="rl" style="left:1518.4px;top:228px">260</div>
<div class="rl" style="left:1589.3px;top:228px">280</div>
<div class="rl" style="left:1660.2px;top:228px">300</div>
<div class="rl" style="left:1731.2px;top:228px">320</div>
<div class="rl" style="left:1802.2px;top:228px">340</div>
<div class="rl" style="left:1873.1px;top:228px">360</div>
<svg style="left:346px;top:247px" width="21" height="694" viewBox="346 247 21 694" stroke="#f2f2f6" stroke-width="1"><path d="M363 251.2H367"/><path d="M363 258.3H367"/><path d="M363 265.4H367"/><path d="M360 272.5H367"/><path d="M363 279.6H367"/><path d="M363 286.7H367"/><path d="M363 293.8H367"/><path d="M363 300.9H367"/><path d="M349 307.9H367"/><path d="M363 315H367"/><path d="M363 322.1H367"/><path d="M363 329.2H367"/><path d="M363 336.3H367"/><path d="M360 343.4H367"/><path d="M363 350.5H367"/><path d="M363 357.6H367"/><path d="M363 364.7H367"/><path d="M363 371.8H367"/><path d="M349 378.9H367"/><path d="M363 386H367"/><path d="M363 393.1H367"/><path d="M363 400.2H367"/><path d="M363 407.3H367"/><path d="M360 414.4H367"/><path d="M363 421.5H367"/><path d="M363 428.6H367"/><path d="M363 435.7H367"/><path d="M363 442.8H367"/><path d="M349 449.9H367"/><path d="M363 456.9H367"/><path d="M363 464H367"/><path d="M363 471.1H367"/><path d="M363 478.2H367"/><path d="M360 485.3H367"/><path d="M363 492.4H367"/><path d="M363 499.5H367"/><path d="M363 506.6H367"/><path d="M363 513.7H367"/><path d="M349 520.8H367"/><path d="M363 527.9H367"/><path d="M363 535H367"/><path d="M363 542.1H367"/><path d="M363 549.2H367"/><path d="M360 556.3H367"/><path d="M363 563.4H367"/><path d="M363 570.5H367"/><path d="M363 577.6H367"/><path d="M363 584.7H367"/><path d="M349 591.8H367"/><path d="M363 598.8H367"/><path d="M363 605.9H367"/><path d="M363 613H367"/><path d="M363 620.1H367"/><path d="M360 627.2H367"/><path d="M363 634.3H367"/><path d="M363 641.4H367"/><path d="M363 648.5H367"/><path d="M363 655.6H367"/><path d="M349 662.7H367"/><path d="M363 669.8H367"/><path d="M363 676.9H367"/><path d="M363 684H367"/><path d="M363 691.1H367"/><path d="M360 698.2H367"/><path d="M363 705.3H367"/><path d="M363 712.4H367"/><path d="M363 719.5H367"/><path d="M363 726.6H367"/><path d="M349 733.7H367"/><path d="M363 740.7H367"/><path d="M363 747.8H367"/><path d="M363 754.9H367"/><path d="M363 762H367"/><path d="M360 769.1H367"/><path d="M363 776.2H367"/><path d="M363 783.3H367"/><path d="M363 790.4H367"/><path d="M363 797.5H367"/><path d="M349 804.6H367"/><path d="M363 811.7H367"/><path d="M363 818.8H367"/><path d="M363 825.9H367"/><path d="M363 833H367"/><path d="M360 840.1H367"/><path d="M363 847.2H367"/><path d="M363 854.3H367"/><path d="M363 861.4H367"/><path d="M363 868.5H367"/><path d="M349 875.6H367"/><path d="M363 882.6H367"/><path d="M363 889.7H367"/><path d="M363 896.8H367"/><path d="M363 903.9H367"/><path d="M360 911H367"/><path d="M363 918.1H367"/><path d="M363 925.2H367"/><path d="M363 932.3H367"/><path d="M363 939.4H367"/></svg>
<div class="rl" style="left:347px;top:322.4px;width:11.5px;height:11.5px;transform-origin:0 0;transform:rotate(-90deg)">20</div>
<div class="rl" style="left:347px;top:393.4px;width:11.5px;height:11.5px;transform-origin:0 0;transform:rotate(-90deg)">40</div>
<div class="rl" style="left:347px;top:464.4px;width:11.5px;height:11.5px;transform-origin:0 0;transform:rotate(-90deg)">60</div>
<div class="rl" style="left:347px;top:535.3px;width:11.5px;height:11.5px;transform-origin:0 0;transform:rotate(-90deg)">80</div>
<div class="rl" style="left:347px;top:606.2px;width:11.5px;height:11.5px;transform-origin:0 0;transform:rotate(-90deg)">100</div>
<div class="rl" style="left:347px;top:677.2px;width:11.5px;height:11.5px;transform-origin:0 0;transform:rotate(-90deg)">120</div>
<div class="rl" style="left:347px;top:748.2px;width:11.5px;height:11.5px;transform-origin:0 0;transform:rotate(-90deg)">140</div>
<div class="rl" style="left:347px;top:819.1px;width:11.5px;height:11.5px;transform-origin:0 0;transform:rotate(-90deg)">160</div>
<div class="rl" style="left:347px;top:890.1px;width:11.5px;height:11.5px;transform-origin:0 0;transform:rotate(-90deg)">180</div>
<div class="a" id="canvas"><div class="a" id="page"></div></div>
<svg style="left:630px;top:272px" width="1008" height="641" viewBox="630 272 1008 641" fill="none"><rect x="630" y="272" width="1008" height="641" fill="#fff"/><path d="M647.8 272V913" stroke="#f4f4f7"/><path d="M665.5 272V913" stroke="#dedee2"/><path d="M683.2 272V913" stroke="#f4f4f7"/><path d="M701 272V913" stroke="#f4f4f7"/><path d="M718.7 272V913" stroke="#f4f4f7"/><path d="M736.5 272V913" stroke="#dedee2"/><path d="M754.2 272V913" stroke="#f4f4f7"/><path d="M771.9 272V913" stroke="#f4f4f7"/><path d="M789.7 272V913" stroke="#f4f4f7"/><path d="M807.4 272V913" stroke="#dedee2"/><path d="M825.1 272V913" stroke="#f4f4f7"/><path d="M842.9 272V913" stroke="#f4f4f7"/><path d="M860.6 272V913" stroke="#f4f4f7"/><path d="M878.4 272V913" stroke="#dedee2"/><path d="M896.1 272V913" stroke="#f4f4f7"/><path d="M913.8 272V913" stroke="#f4f4f7"/><path d="M931.6 272V913" stroke="#f4f4f7"/><path d="M949.3 272V913" stroke="#dedee2"/><path d="M967 272V913" stroke="#f4f4f7"/><path d="M984.8 272V913" stroke="#f4f4f7"/><path d="M1002.5 272V913" stroke="#f4f4f7"/><path d="M1020.2 272V913" stroke="#dedee2"/><path d="M1038 272V913" stroke="#f4f4f7"/><path d="M1055.7 272V913" stroke="#f4f4f7"/><path d="M1073.5 272V913" stroke="#f4f4f7"/><path d="M1091.2 272V913" stroke="#dedee2"/><path d="M1108.9 272V913" stroke="#f4f4f7"/><path d="M1126.7 272V913" stroke="#f4f4f7"/><path d="M1144.4 272V913" stroke="#f4f4f7"/><path d="M1162.2 272V913" stroke="#dedee2"/><path d="M1179.9 272V913" stroke="#f4f4f7"/><path d="M1197.6 272V913" stroke="#f4f4f7"/><path d="M1215.4 272V913" stroke="#f4f4f7"/><path d="M1233.1 272V913" stroke="#dedee2"/><path d="M1250.8 272V913" stroke="#f4f4f7"/><path d="M1268.6 272V913" stroke="#f4f4f7"/><path d="M1286.3 272V913" stroke="#f4f4f7"/><path d="M1304.1 272V913" stroke="#dedee2"/><path d="M1321.8 272V913" stroke="#f4f4f7"/><path d="M1339.5 272V913" stroke="#f4f4f7"/><path d="M1357.3 272V913" stroke="#f4f4f7"/><path d="M1375 272V913" stroke="#dedee2"/><path d="M1392.7 272V913" stroke="#f4f4f7"/><path d="M1410.5 272V913" stroke="#f4f4f7"/><path d="M1428.2 272V913" stroke="#f4f4f7"/><path d="M1446 272V913" stroke="#dedee2"/><path d="M1463.7 272V913" stroke="#f4f4f7"/><path d="M1481.4 272V913" stroke="#f4f4f7"/><path d="M1499.2 272V913" stroke="#f4f4f7"/><path d="M1516.9 272V913" stroke="#dedee2"/><path d="M1534.6 272V913" stroke="#f4f4f7"/><path d="M1552.4 272V913" stroke="#f4f4f7"/><path d="M1570.1 272V913" stroke="#f4f4f7"/><path d="M1587.8 272V913" stroke="#dedee2"/><path d="M1605.6 272V913" stroke="#f4f4f7"/><path d="M1623.3 272V913" stroke="#f4f4f7"/><path d="M630 273H1638" stroke="#f4f4f7"/><path d="M630 290.8H1638" stroke="#f4f4f7"/><path d="M630 308.5H1638" stroke="#dedee2"/><path d="M630 326.2H1638" stroke="#f4f4f7"/><path d="M630 344H1638" stroke="#f4f4f7"/><path d="M630 361.7H1638" stroke="#f4f4f7"/><path d="M630 379.4H1638" stroke="#dedee2"/><path d="M630 397.2H1638" stroke="#f4f4f7"/><path d="M630 414.9H1638" stroke="#f4f4f7"/><path d="M630 432.7H1638" stroke="#f4f4f7"/><path d="M630 450.4H1638" stroke="#dedee2"/><path d="M630 468.1H1638" stroke="#f4f4f7"/><path d="M630 485.9H1638" stroke="#f4f4f7"/><path d="M630 503.6H1638" stroke="#f4f4f7"/><path d="M630 521.4H1638" stroke="#dedee2"/><path d="M630 539.1H1638" stroke="#f4f4f7"/><path d="M630 556.8H1638" stroke="#f4f4f7"/><path d="M630 574.6H1638" stroke="#f4f4f7"/><path d="M630 592.3H1638" stroke="#dedee2"/><path d="M630 610H1638" stroke="#f4f4f7"/><path d="M630 627.8H1638" stroke="#f4f4f7"/><path d="M630 645.5H1638" stroke="#f4f4f7"/><path d="M630 663.2H1638" stroke="#dedee2"/><path d="M630 681H1638" stroke="#f4f4f7"/><path d="M630 698.7H1638" stroke="#f4f4f7"/><path d="M630 716.5H1638" stroke="#f4f4f7"/><path d="M630 734.2H1638" stroke="#dedee2"/><path d="M630 751.9H1638" stroke="#f4f4f7"/><path d="M630 769.7H1638" stroke="#f4f4f7"/><path d="M630 787.4H1638" stroke="#f4f4f7"/><path d="M630 805.2H1638" stroke="#dedee2"/><path d="M630 822.9H1638" stroke="#f4f4f7"/><path d="M630 840.6H1638" stroke="#f4f4f7"/><path d="M630 858.4H1638" stroke="#f4f4f7"/><path d="M630 876.1H1638" stroke="#dedee2"/><path d="M630 893.8H1638" stroke="#f4f4f7"/><path d="M630 911.6H1638" stroke="#f4f4f7"/><rect x="630.5" y="272.5" width="1007" height="640" stroke="#d4d4da"/></svg>
<div class="t" style="left:721px;top:332.5px;font-size:41px;color:#3c9d8b;height:41px;font-weight:bold;transform:scaleX(0.951);">RI</div>
<div class="a" style="left:1090px;top:273px;width:545.5px;height:67px;background:#3a68ef"></div>
<div class="a" style="left:1091px;top:340px;width:108px;height:79px;background:#42b0fd"></div>
<div class="a" style="left:1091px;top:421px;width:108px;height:28px;background:#3a68ef"></div>
<div class="a" style="left:1201px;top:340px;width:107px;height:79px;background:#42b0fd"></div>
<div class="a" style="left:1201px;top:421px;width:107px;height:28px;background:#3a68ef"></div>
<div class="a" style="left:1310px;top:340px;width:107px;height:79px;background:#42b0fd"></div>
<div class="a" style="left:1310px;top:421px;width:107px;height:28px;background:#3a68ef"></div>
<div class="a" style="left:1419px;top:340px;width:108px;height:79px;background:#42b0fd"></div>
<div class="a" style="left:1419px;top:421px;width:108px;height:28px;background:#3a68ef"></div>
<div class="a" style="left:1529px;top:340px;width:106.5px;height:79px;background:#42b0fd"></div>
<div class="a" style="left:1529px;top:421px;width:106.5px;height:28px;background:#3a68ef"></div>
<div class="t" style="left:1563.25px;top:360.1px;font-size:15.5px;color:#f2fbff;height:15.5px;font-weight:bold;transform:scaleX(0.949);-webkit-text-stroke:0;">VERY</div>
<div class="t" style="left:1563.75px;top:382.6px;font-size:15.5px;color:#f2fbff;height:15.5px;font-weight:bold;transform:scaleX(1.01);-webkit-text-stroke:0;">LOW</div>
<div class="t" style="left:1121.5px;top:381.9px;font-size:16.5px;color:#fff;height:16.5px;font-weight:bold;transform:scaleX(1.139);">HIGH</div>
<div class="cell" style="left:1529px;top:437px;width:108px;height:18px;font-size:13px">2</div>
<div class="cell" style="left:1091px;top:437px;width:108px;height:18px;font-size:13px">10</div>
<div class="a" style="left:672px;top:449px;width:966px;height:25px;background:#f6f6f7;border:1px solid #d2d2d6;border-bottom:none"></div>
<div class="a" style="left:672px;top:449px;width:25px;height:464px;background:#f6f6f7;border:1px solid #d2d2d6"></div>
<div class="a" style="left:980.5px;top:450px;width:1px;height:24px;background:#d2d2d6"></div>
<div class="a" style="left:1089.5px;top:450px;width:1px;height:24px;background:#d2d2d6"></div>
<div class="a" style="left:1199.5px;top:450px;width:1px;height:24px;background:#d2d2d6"></div>
<div class="a" style="left:1308.5px;top:450px;width:1px;height:24px;background:#d2d2d6"></div>
<div class="a" style="left:1418px;top:450px;width:1px;height:24px;background:#d2d2d6"></div>
<div class="a" style="left:1527.5px;top:450px;width:1px;height:24px;background:#d2d2d6"></div>
<div class="a" style="left:673px;top:558px;width:24px;height:1px;background:#d2d2d6"></div>
<div class="a" style="left:673px;top:650.5px;width:24px;height:1px;background:#d2d2d6"></div>
<div class="a" style="left:673px;top:735.5px;width:24px;height:1px;background:#d2d2d6"></div>
<div class="a" style="left:673px;top:826.5px;width:24px;height:1px;background:#d2d2d6"></div>
<svg style="left:676px;top:453px" width="16" height="16"><path d="M14.5 1.5V14.5H1.5Z" fill="#d2d2d4"/></svg>
<div class="a" style="left:631px;top:474px;width:41px;height:437px;background:#3a68ef"></div>
<div class="a" style="left:631px;top:474px;width:41px;height:437px;display:flex;align-items:center;justify-content:center"><div style="transform:rotate(-90deg) scaleX(1);white-space:nowrap;color:#fff;font-weight:bold;font-size:21px;line-height:1;position:relative;left:11px">SEVERITY</div></div>
<div class="a" style="left:697px;top:474px;width:283px;height:83px;background:#42b0fd"></div>
<div class="t" style="left:805px;top:500px;font-size:13px;color:rgba(255,255,255,.9);height:13px;font-weight:bold;transform:scaleX(0.946);-webkit-text-stroke:0;">VERY HIGH</div>
<div class="t" style="left:819.75px;top:518.4px;font-size:13px;color:rgba(255,255,255,.9);height:13px;font-weight:bold;transform:scaleX(1.038);-webkit-text-stroke:0;">Death</div>
<div class="a" style="left:982px;top:474px;width:107px;height:83px;background:#3a68ef"></div>
<div class="t" style="left:1028px;top:509.7px;font-size:13px;color:rgba(255,255,255,.9);height:13px;font-weight:bold;transform:scaleX(0.968);-webkit-text-stroke:0;">10</div>
<div class="a" style="left:1091px;top:474px;width:108px;height:83px;background:#f5605f"></div>
<div class="t" style="left:1134.5px;top:509.7px;font-size:13px;color:rgba(255,255,255,.86);height:13px;font-weight:bold;transform:scaleX(0.968);-webkit-text-stroke:0;">100</div>
<div class="a" style="left:1201px;top:474px;width:107px;height:83px;background:#f5605f"></div>
<div class="t" style="left:1247.5px;top:509.7px;font-size:13px;color:rgba(255,255,255,.86);height:13px;font-weight:bold;transform:scaleX(0.968);-webkit-text-stroke:0;">80</div>
<div class="a" style="left:1310px;top:474px;width:107px;height:83px;background:#f5605f"></div>
<div class="t" style="left:1356.5px;top:509.7px;font-size:13px;color:rgba(255,255,255,.86);height:13px;font-weight:bold;transform:scaleX(0.968);-webkit-text-stroke:0;">60</div>
<div class="a" style="left:1419px;top:474px;width:108px;height:83px;background:#fec45c"></div>
<div class="t" style="left:1466px;top:509.7px;font-size:13px;color:rgba(255,255,255,.86);height:13px;font-weight:bold;transform:scaleX(0.968);-webkit-text-stroke:0;">40</div>
<div class="a" style="left:1529px;top:474px;width:108px;height:83px;background:#fec45c"></div>
<div class="t" style="left:1576px;top:509.7px;font-size:13px;color:rgba(255,255,255,.86);height:13px;font-weight:bold;transform:scaleX(0.968);-webkit-text-stroke:0;">20</div>
<div class="a" style="left:697px;top:559px;width:283px;height:91px;background:#42b0fd"></div>
<div class="t" style="left:823px;top:589px;font-size:13px;color:rgba(255,255,255,.9);height:13px;font-weight:bold;transform:scaleX(0.954);-webkit-text-stroke:0;">HIGH</div>
<div class="t" style="left:728.5px;top:607.4px;font-size:13px;color:rgba(255,255,255,.9);height:13px;font-weight:bold;transform:scaleX(1.04);-webkit-text-stroke:0;">Severe injury,Permanent disability</div>
<div class="a" style="left:982px;top:559px;width:107px;height:91px;background:#3a68ef"></div>
<div class="t" style="left:1031.5px;top:598.7px;font-size:13px;color:rgba(255,255,255,.9);height:13px;font-weight:bold;transform:scaleX(0.968);-webkit-text-stroke:0;">8</div>
<div class="a" style="left:1091px;top:559px;width:108px;height:91px;background:#f5605f"></div>
<div class="t" style="left:1138px;top:598.7px;font-size:13px;color:rgba(255,255,255,.86);height:13px;font-weight:bold;transform:scaleX(0.968);-webkit-text-stroke:0;">80</div>
<div class="a" style="left:1201px;top:559px;width:107px;height:91px;background:#f5605f"></div>
<div class="t" style="left:1247.5px;top:598.7px;font-size:13px;color:rgba(255,255,255,.86);height:13px;font-weight:bold;transform:scaleX(0.968);-webkit-text-stroke:0;">64</div>
<div class="a" style="left:1310px;top:559px;width:107px;height:91px;background:#fec45c"></div>
<div class="t" style="left:1356.5px;top:598.7px;font-size:13px;color:rgba(255,255,255,.86);height:13px;font-weight:bold;transform:scaleX(0.968);-webkit-text-stroke:0;">48</div>
<div class="a" style="left:1419px;top:559px;width:108px;height:91px;background:#fec45c"></div>
<div class="t" style="left:1466px;top:598.7px;font-size:13px;color:rgba(255,255,255,.86);height:13px;font-weight:bold;transform:scaleX(0.968);-webkit-text-stroke:0;">32</div>
<div class="a" style="left:1529px;top:559px;width:108px;height:91px;background:#fec45c"></div>
<div class="t" style="left:1576px;top:598.7px;font-size:13px;color:rgba(255,255,255,.86);height:13px;font-weight:bold;transform:scaleX(0.968);-webkit-text-stroke:0;">16</div>
<div class="a" style="left:697px;top:652px;width:283px;height:83px;background:#42b0fd"></div>
<div class="t" style="left:810.5px;top:678px;font-size:13px;color:rgba(255,255,255,.9);height:13px;font-weight:bold;transform:scaleX(1.062);-webkit-text-stroke:0;">MEDIUM</div>
<div class="t" style="left:789px;top:696.4px;font-size:13px;color:rgba(255,255,255,.9);height:13px;font-weight:bold;transform:scaleX(1.03);-webkit-text-stroke:0;">Last time injury</div>
<div class="a" style="left:982px;top:652px;width:107px;height:83px;background:#3a68ef"></div>
<div class="t" style="left:1031.5px;top:687.7px;font-size:13px;color:rgba(255,255,255,.9);height:13px;font-weight:bold;transform:scaleX(0.968);-webkit-text-stroke:0;">6</div>
<div class="a" style="left:1091px;top:652px;width:108px;height:83px;background:#f5605f"></div>
<div class="t" style="left:1138px;top:687.7px;font-size:13px;color:rgba(255,255,255,.86);height:13px;font-weight:bold;transform:scaleX(0.968);-webkit-text-stroke:0;">60</div>
<div class="a" style="left:1201px;top:652px;width:107px;height:83px;background:#fec45c"></div>
<div class="t" style="left:1247.5px;top:687.7px;font-size:13px;color:rgba(255,255,255,.86);height:13px;font-weight:bold;transform:scaleX(0.968);-webkit-text-stroke:0;">48</div>
<div class="a" style="left:1310px;top:652px;width:107px;height:83px;background:#fec45c"></div>
<div class="t" style="left:1356.5px;top:687.7px;font-size:13px;color:rgba(255,255,255,.86);height:13px;font-weight:bold;transform:scaleX(0.968);-webkit-text-stroke:0;">36</div>
<div class="a" style="left:1419px;top:652px;width:108px;height:83px;background:#fec45c"></div>
<div class="t" style="left:1466px;top:687.7px;font-size:13px;color:rgba(255,255,255,.86);height:13px;font-weight:bold;transform:scaleX(0.968);-webkit-text-stroke:0;">24</div>
<div class="a" style="left:1529px;top:652px;width:108px;height:83px;background:#8fd5a8"></div>
<div class="t" style="left:1576px;top:687.7px;font-size:13px;color:rgba(255,255,255,.86);height:13px;font-weight:bold;transform:scaleX(0.968);-webkit-text-stroke:0;">12</div>
<div class="a" style="left:697px;top:737px;width:283px;height:89px;background:#42b0fd"></div>
<div class="t" style="left:823.5px;top:766px;font-size:13px;color:rgba(255,255,255,.9);height:13px;font-weight:bold;transform:scaleX(0.989);-webkit-text-stroke:0;">LOW</div>
<div class="t" style="left:733.5px;top:784.4px;font-size:13px;color:rgba(255,255,255,.9);height:13px;font-weight:bold;transform:scaleX(1.065);-webkit-text-stroke:0;">Non lost time-Medical treatment</div>
<div class="a" style="left:982px;top:737px;width:107px;height:89px;background:#3a68ef"></div>
<div class="t" style="left:1031.5px;top:775.7px;font-size:13px;color:rgba(255,255,255,.9);height:13px;font-weight:bold;transform:scaleX(0.968);-webkit-text-stroke:0;">4</div>
<div class="a" style="left:1091px;top:737px;width:108px;height:89px;background:#fec45c"></div>
<div class="t" style="left:1138px;top:775.7px;font-size:13px;color:rgba(255,255,255,.86);height:13px;font-weight:bold;transform:scaleX(0.968);-webkit-text-stroke:0;">40</div>
<div class="a" style="left:1201px;top:737px;width:107px;height:89px;background:#fec45c"></div>
<div class="t" style="left:1247.5px;top:775.7px;font-size:13px;color:rgba(255,255,255,.86);height:13px;font-weight:bold;transform:scaleX(0.968);-webkit-text-stroke:0;">32</div>
<div class="a" style="left:1310px;top:737px;width:107px;height:89px;background:#fec45c"></div>
<div class="t" style="left:1356.5px;top:775.7px;font-size:13px;color:rgba(255,255,255,.86);height:13px;font-weight:bold;transform:scaleX(0.968);-webkit-text-stroke:0;">24</div>
<div class="a" style="left:1419px;top:737px;width:108px;height:89px;background:#8fd5a8"></div>
<div class="t" style="left:1466px;top:775.7px;font-size:13px;color:rgba(255,255,255,.86);height:13px;font-weight:bold;transform:scaleX(0.968);-webkit-text-stroke:0;">16</div>
<div class="a" style="left:1529px;top:737px;width:108px;height:89px;background:#8fd5a8"></div>
<div class="t" style="left:1579.5px;top:775.7px;font-size:13px;color:rgba(255,255,255,.86);height:13px;font-weight:bold;transform:scaleX(0.968);-webkit-text-stroke:0;">8</div>
<div class="a" style="left:697px;top:828px;width:283px;height:84px;background:#42b0fd"></div>
<div class="t" style="left:805.5px;top:854.5px;font-size:13px;color:rgba(255,255,255,.9);height:13px;font-weight:bold;transform:scaleX(0.962);-webkit-text-stroke:0;">VERY LOW</div>
<div class="t" style="left:784.5px;top:872.9px;font-size:13px;color:rgba(255,255,255,.9);height:13px;font-weight:bold;transform:scaleX(1.099);-webkit-text-stroke:0;">Minor treatment</div>
<div class="a" style="left:982px;top:828px;width:107px;height:84px;background:#3a68ef"></div>
<div class="t" style="left:1031.5px;top:864.2px;font-size:13px;color:rgba(255,255,255,.9);height:13px;font-weight:bold;transform:scaleX(0.968);-webkit-text-stroke:0;">2</div>
<div class="a" style="left:1091px;top:828px;width:108px;height:84px;background:#fec45c"></div>
<div class="t" style="left:1138px;top:864.2px;font-size:13px;color:rgba(255,255,255,.86);height:13px;font-weight:bold;transform:scaleX(0.968);-webkit-text-stroke:0;">20</div>
<div class="a" style="left:1201px;top:828px;width:107px;height:84px;background:#fec45c"></div>
<div class="t" style="left:1247.5px;top:864.2px;font-size:13px;color:rgba(255,255,255,.86);height:13px;font-weight:bold;transform:scaleX(0.968);-webkit-text-stroke:0;">16</div>
<div class="a" style="left:1310px;top:828px;width:107px;height:84px;background:#8fd5a8"></div>
<div class="t" style="left:1356.5px;top:864.2px;font-size:13px;color:rgba(255,255,255,.86);height:13px;font-weight:bold;transform:scaleX(0.968);-webkit-text-stroke:0;">12</div>
<div class="a" style="left:1419px;top:828px;width:108px;height:84px;background:#8fd5a8"></div>
<div class="t" style="left:1469.5px;top:864.2px;font-size:13px;color:rgba(255,255,255,.86);height:13px;font-weight:bold;transform:scaleX(0.968);-webkit-text-stroke:0;">8</div>
<div class="a" style="left:1529px;top:828px;width:108px;height:84px;background:#8fd5a8"></div>
<div class="t" style="left:1579.5px;top:864.2px;font-size:13px;color:rgba(255,255,255,.86);height:13px;font-weight:bold;transform:scaleX(0.968);-webkit-text-stroke:0;">4</div>
<svg style="left:696px;top:473px" width="943" height="440"><rect x=".5" y=".5" width="942" height="439" fill="none" stroke="#26466e" stroke-width="1.2" stroke-dasharray="4 3"/></svg>
<div class="hd" style="left:692px;top:469px"></div>
<div class="hd" style="left:1633px;top:469px"></div>
<div class="hd" style="left:692px;top:688px"></div>
<div class="hd" style="left:1633px;top:688px"></div>
<div class="hd" style="left:692px;top:907px"></div>
<div class="hd" style="left:1162px;top:907px"></div>
<div class="hd" style="left:1633px;top:907px"></div>
<div class="a" style="left:1817px;top:262px;width:68px;height:68px;border-radius:50%;background:#c9d9f1"></div>
<div class="a" style="left:1828px;top:273px;width:46px;height:46px;border-radius:50%;background:#fff"></div>
<svg class="" style="left:1834px;top:281px" width="34" height="30" viewBox="0 0 34 30"><path d="M11.9 3.7L20.5 3L10 26L0 28.7Z" fill="#3d8ff6"/><path d="M13.8 3H21.2L29.8 26L24.2 28L17 12Z" fill="#1f5fe2"/><path d="M13.8 3H21.2L22.5 6.5L17 12Z" fill="#1a3fc0"/></svg>
<div class="a" id="vscroll"></div><div class="a" style="left:1906px;top:342px;width:11px;height:469px;border-radius:5.5px;background:#d0d0d4"></div>
<div class="a" id="hscroll"></div><div class="a" style="left:486px;top:945px;width:1259px;height:12px;border-radius:6px;background:#d4d4d8"></div>
<div class="a" id="ftb"></div>
<svg class="" style="left:780px;top:311px" width="28" height="26" viewBox="0 0 28 26"><defs><linearGradient id="ga" x1="0" y1="1" x2="1" y2="0"><stop offset="0" stop-color="#3b7cf6"/><stop offset="1" stop-color="#5cc0f8"/></linearGradient><linearGradient id="gb" x1="0" y1="0" x2="1" y2="1"><stop offset="0" stop-color="#8a3cf0"/><stop offset="1" stop-color="#f04a9a"/></linearGradient><linearGradient id="gc" x1="0" y1="1" x2="1" y2="0"><stop offset="0" stop-color="#f86aa0"/><stop offset="1" stop-color="#fca6b8"/></linearGradient></defs><path d="M2 21L10 5h6L8 21Z" fill="url(#ga)"/><path d="M10 5h6l6 16h-6Z" fill="url(#gb)"/><path d="M16 21L22 5h4L20 21Z" fill="url(#gc)"/></svg>
<div class="t" style="left:778.657px;top:352.8px;font-size:12.5px;color:#222;height:12.5px;transform:scaleX(0.96);">Table</div>
<div class="t" style="left:770.659px;top:369.8px;font-size:12.5px;color:#222;height:12.5px;transform:scaleX(0.96);">Analysis</div>
<div class="a" style="left:826px;top:306px;width:1px;height:76px;background:#f2f2f5"></div>
<div class="a" style="left:1028px;top:306px;width:1px;height:76px;background:#f2f2f5"></div>
<div class="a" style="left:1093px;top:306px;width:1px;height:76px;background:#f2f2f5"></div>
<div class="a" style="left:1258px;top:306px;width:1px;height:76px;background:#f2f2f5"></div>
<div class="a" style="left:1410px;top:306px;width:1px;height:76px;background:#f2f2f5"></div>
<div class="a" style="left:1472px;top:306px;width:1px;height:76px;background:#f2f2f5"></div>
<div class="a" style="left:840px;top:305px;width:111px;height:29px;border-radius:5px;border:1px solid #f5f5f8;background:#fff"></div>
<svg class="icg" style="left:846px;top:310px" width="20" height="20" viewBox="0 0 20 20"><circle cx="8.5" cy="8.5" r="6.5"/><path d="M13.5 13.5l3 3"/></svg>
<div class="t" style="left:872px;top:311.5px;font-size:15px;color:#222;height:15px;transform:scaleX(0.988);">Calibri</div>
<div class="dd" style="left:938px;top:317px"></div>
<div class="a" style="left:959px;top:305px;width:59px;height:29px;border-radius:5px;border:1px solid #f5f5f8;background:#fff"></div>
<div class="t" style="left:967px;top:311.5px;font-size:15px;color:#222;height:15px;transform:scaleX(0.959);">12</div>
<div class="dd" style="left:1005px;top:317px"></div>
<div class="a" style="left:839px;top:339px;width:30px;height:30px;border-radius:5px;background:#f0f0f2"></div>
<div class="t" style="left:847px;top:343px;font-size:20px;color:#222;height:20px;transform:scaleX(1.049);-webkit-text-stroke:0.5px #222;">B</div>
<div class="t" style="left:885px;top:343px;font-size:20px;color:#222;height:20px;font-style:italic;transform:scaleX(1.44);font-family:'Liberation Serif',serif;-webkit-text-stroke:0.5px #222;">I</div>
<svg class="ic" style="left:917px;top:344px" width="22" height="20" viewBox="0 0 22 20"><path d="M2 2h17M2 7h11.5M2 12h17M2 17h11.5" stroke-width="1.9"/></svg>
<div class="t" style="left:954px;top:340.5px;font-size:19px;color:#222;height:19px;transform:scaleX(1.041);">ab</div>
<div class="a" style="left:954px;top:362px;width:22px;height:2.5px;background:#111"></div>
<div class="t" style="left:993px;top:341px;font-size:21px;color:#222;height:21px;transform:scaleX(1.107);-webkit-text-stroke:0.5px #222;">A</div>
<svg class="ic" style="left:1048px;top:310px" width="28" height="26" viewBox="0 0 28 26"><path d="M2.8 13.6L13.2 6.8L22.4 13.9L13.8 24Z" stroke-width="2.3"/><path d="M17.8 9.8l3.4-4.4" stroke-width="3.2"/></svg>
<div class="t" style="left:1041.998px;top:352.8px;font-size:12.5px;color:#222;height:12.5px;transform:scaleX(0.96);">Format</div>
<div class="t" style="left:1041.98975px;top:369.8px;font-size:12.5px;color:#222;height:12.5px;transform:scaleX(0.96);">Painter</div>
<div class="a" style="left:1107px;top:304px;width:39px;height:40px;border-radius:6px;background:#efeff1"></div>
<svg class="ic" style="left:1114px;top:311px" width="26" height="26" viewBox="0 0 26 26"><path d="M3.5 13V5.5a2.5 2.5 0 0 1 2.5-2.5H19" stroke-width="2.2"/><path d="M23.5 13.5v6.5a2.5 2.5 0 0 1-2.5 2.5H18.5" stroke-width="2.2"/><path d="M21.5 7.5L12.5 16.5" stroke-width="3.2"/><circle cx="8.5" cy="20.5" r="1.9" fill="#77777c" stroke="none"/></svg>
<div class="t" style="left:1109.66125px;top:352.8px;font-size:12.5px;color:#222;height:12.5px;transform:scaleX(0.96);">Styles</div>
<svg class="ic" style="left:1164px;top:309px" width="26" height="26" viewBox="0 0 26 26"><path d="M5.2 12.8L12.9 5.2L21.5 12.8L13.6 20.6a1.2 1.2 0 0 1-1.6 0L5.2 14.4a1.2 1.2 0 0 1 0-1.6Z" stroke-width="2.2"/><path d="M7 5.5l5.5 5" stroke-width="2.2"/><circle cx="21.8" cy="17.8" r="1.2" fill="#2a2a2e" stroke="none"/></svg>
<div class="t" style="left:1168.3365px;top:352.8px;font-size:12.5px;color:#222;height:12.5px;transform:scaleX(0.96);">Fill</div>
<svg class="ic" style="left:1215px;top:311px" width="24" height="24" viewBox="0 0 24 24"><path d="M20.5 4L9.5 14.5" stroke-width="3.2"/><circle cx="6" cy="17.8" r="1.9" fill="#77777c" stroke="none"/></svg>
<div class="t" style="left:1214.657px;top:352.8px;font-size:12.5px;color:#222;height:12.5px;transform:scaleX(0.96);">Line</div>
<div class="a" style="left:1271px;top:308px;width:58px;height:31px;border-radius:5px;border:1px solid #f6f6f9;background:#fff"></div>
<div class="t" style="left:1280px;top:316px;font-size:15px;color:#222;height:15px;transform:scaleX(1.019);">5</div>
<div class="a" style="left:1316px;top:314.5px;border-left:4px solid transparent;border-right:4px solid transparent;border-bottom:5px solid #707078"></div>
<div class="a" style="left:1316px;top:327px;border-left:4px solid transparent;border-right:4px solid transparent;border-top:5px solid #707078"></div>
<div class="t" style="left:1286.99775px;top:352.8px;font-size:12.5px;color:#222;height:12.5px;transform:scaleX(0.96);">Row</div>
<div class="a" style="left:1341px;top:308px;width:58px;height:31px;border-radius:5px;border:1px solid #f6f6f9;background:#fff"></div>
<div class="t" style="left:1350px;top:316px;font-size:15px;color:#222;height:15px;transform:scaleX(1.019);">7</div>
<div class="a" style="left:1386px;top:314.5px;border-left:4px solid transparent;border-right:4px solid transparent;border-bottom:5px solid #707078"></div>
<div class="a" style="left:1386px;top:327px;border-left:4px solid transparent;border-right:4px solid transparent;border-top:5px solid #707078"></div>
<div class="t" style="left:1349.32625px;top:352.8px;font-size:12.5px;color:#222;height:12.5px;transform:scaleX(0.96);">Column</div>
<svg class="ic" style="left:1427px;top:310px" width="28" height="28" viewBox="0 0 28 28"><path d="M2.5 2.5h19v9M2.5 2.5v20h9M2.5 8.5h19M2.5 15h9M9 2.5v20M15.5 2.5v9" stroke-width="2.2"/><path d="M16 16l8 8M24 16l-8 8" stroke="#e8364c" stroke-width="2.2"/></svg>
<div class="t" style="left:1422.657px;top:352.8px;font-size:12.5px;color:#222;height:12.5px;transform:scaleX(0.96);">Delete</div>
<svg class="ic" style="left:1490px;top:311px" width="26" height="26" viewBox="0 0 26 26"><circle cx="13" cy="13" r="11.3" stroke-width="2.3"/><circle cx="13" cy="7.5" r="1.4" fill="#2a2a2e" stroke="none"/><circle cx="13" cy="13" r="1.4" fill="#2a2a2e" stroke="none"/><circle cx="13" cy="18.5" r="1.4" fill="#2a2a2e" stroke="none"/></svg>
<div class="t" style="left:1489.3305px;top:352.8px;font-size:12.5px;color:#222;height:12.5px;transform:scaleX(0.96);">More</div>
<svg class="ic" style="left:1533px;top:301px" width="16" height="16" viewBox="0 0 16 16"><path d="M9.5 1.5l5 5-2 .500-2.5 2.5-.500 3.5-6.5-6.5 3.5-.500 2.5-2.5ZM5.5 10.5L1.5 14.5" stroke="#9a9aa4" stroke-width="1.2"/></svg>
<svg class="ic" style="left:1534px;top:371px" width="14" height="14" viewBox="0 0 14 14"><path d="M5.5 1v4.5H1M8.5 13V8.5H13" stroke="#b0b0b8" stroke-width="1.2"/></svg>
<div class="a" id="drop"></div>
<div class="t" style="left:1126px;top:420px;font-size:15px;color:#222;height:15px;transform:scaleX(1.015);">Light</div>
<div class="t" style="left:1126px;top:615px;font-size:15px;color:#222;height:15px;transform:scaleX(1.031);">Medium</div>
<svg width="383" height="424" viewBox="1107 400 383 424" shape-rendering="crispEdges" style="left:1107px;top:400px;overflow:hidden"><rect x="1126" y="464" width="40" height="10" fill="#e4e4e4"/><rect x="1126" y="484" width="40" height="10" fill="#e4e4e4"/><rect x="1126" y="454" width="40" height="1" fill="#000000"/><rect x="1126" y="464" width="40" height="1" fill="#000000"/><rect x="1126" y="493.5" width="40" height="1" fill="#000000"/><rect x="1176" y="464" width="40" height="10" fill="#e3e8fc"/><rect x="1176" y="484" width="40" height="10" fill="#e3e8fc"/><rect x="1176" y="454" width="40" height="1" fill="#7e9de6"/><rect x="1176" y="464" width="40" height="1" fill="#7e9de6"/><rect x="1176" y="493.5" width="40" height="1" fill="#7e9de6"/><rect x="1226" y="464" width="40" height="10" fill="#dfe2f5"/><rect x="1226" y="484" width="40" height="10" fill="#dfe2f5"/><rect x="1226" y="454" width="40" height="1" fill="#5563b4"/><rect x="1226" y="464" width="40" height="1" fill="#5563b4"/><rect x="1226" y="493.5" width="40" height="1" fill="#5563b4"/><rect x="1276" y="464" width="40" height="10" fill="#fde3e3"/><rect x="1276" y="484" width="40" height="10" fill="#fde3e3"/><rect x="1276" y="454" width="40" height="1" fill="#f0a4a4"/><rect x="1276" y="464" width="40" height="1" fill="#f0a4a4"/><rect x="1276" y="493.5" width="40" height="1" fill="#f0a4a4"/><rect x="1326" y="464" width="40" height="10" fill="#fff0d6"/><rect x="1326" y="484" width="40" height="10" fill="#fff0d6"/><rect x="1326" y="454" width="40" height="1" fill="#f4d78c"/><rect x="1326" y="464" width="40" height="1" fill="#f4d78c"/><rect x="1326" y="493.5" width="40" height="1" fill="#f4d78c"/><rect x="1376" y="464" width="40" height="10" fill="#e5effe"/><rect x="1376" y="484" width="40" height="10" fill="#e5effe"/><rect x="1376" y="454" width="40" height="1" fill="#a6c6ee"/><rect x="1376" y="464" width="40" height="1" fill="#a6c6ee"/><rect x="1376" y="493.5" width="40" height="1" fill="#a6c6ee"/><rect x="1426" y="464" width="40" height="10" fill="#e5e7fc"/><rect x="1426" y="484" width="40" height="10" fill="#e5e7fc"/><rect x="1426" y="454" width="40" height="1" fill="#969fe0"/><rect x="1426" y="464" width="40" height="1" fill="#969fe0"/><rect x="1426" y="493.5" width="40" height="1" fill="#969fe0"/><rect x="1126" y="504" width="40" height="10.5" fill="#000000"/><rect x="1126" y="524" width="40" height="1" fill="#000000"/><rect x="1126" y="534" width="40" height="1" fill="#000000"/><rect x="1126.5" y="504.5" width="39" height="39" fill="none" stroke="#000000"/><rect x="1176" y="504" width="40" height="10.5" fill="#3f78ee"/><rect x="1176" y="524" width="40" height="1" fill="#7e9de6"/><rect x="1176" y="534" width="40" height="1" fill="#7e9de6"/><rect x="1176.5" y="504.5" width="39" height="39" fill="none" stroke="#7e9de6"/><rect x="1226" y="504" width="40" height="10.5" fill="#3c4fb8"/><rect x="1226" y="524" width="40" height="1" fill="#5563b4"/><rect x="1226" y="534" width="40" height="1" fill="#5563b4"/><rect x="1226.5" y="504.5" width="39" height="39" fill="none" stroke="#5563b4"/><rect x="1276" y="504" width="40" height="10.5" fill="#f46a6a"/><rect x="1276" y="524" width="40" height="1" fill="#f0a4a4"/><rect x="1276" y="534" width="40" height="1" fill="#f0a4a4"/><rect x="1276.5" y="504.5" width="39" height="39" fill="none" stroke="#f0a4a4"/><rect x="1326" y="504" width="40" height="10.5" fill="#fec44a"/><rect x="1326" y="524" width="40" height="1" fill="#f4d78c"/><rect x="1326" y="534" width="40" height="1" fill="#f4d78c"/><rect x="1326.5" y="504.5" width="39" height="39" fill="none" stroke="#f4d78c"/><rect x="1376" y="504" width="40" height="10.5" fill="#7ab6f5"/><rect x="1376" y="524" width="40" height="1" fill="#a6c6ee"/><rect x="1376" y="534" width="40" height="1" fill="#a6c6ee"/><rect x="1376.5" y="504.5" width="39" height="39" fill="none" stroke="#a6c6ee"/><rect x="1426" y="504" width="40" height="10.5" fill="#6a7cec"/><rect x="1426" y="524" width="40" height="1" fill="#969fe0"/><rect x="1426" y="534" width="40" height="1" fill="#969fe0"/><rect x="1426.5" y="504.5" width="39" height="39" fill="none" stroke="#969fe0"/><rect x="1126" y="564" width="40" height="10" fill="#e4e4e4"/><rect x="1126" y="584" width="40" height="10" fill="#e4e4e4"/><rect x="1126" y="564" width="40" height="1" fill="#000000"/><rect x="1126" y="574" width="40" height="1" fill="#000000"/><rect x="1126" y="583.5" width="40" height="1" fill="#000000"/><rect x="1126.5" y="554.5" width="39" height="39" fill="none" stroke="#000000"/><rect x="1176" y="564" width="40" height="10" fill="#e3e8fc"/><rect x="1176" y="584" width="40" height="10" fill="#e3e8fc"/><rect x="1176" y="564" width="40" height="1" fill="#7e9de6"/><rect x="1176" y="574" width="40" height="1" fill="#7e9de6"/><rect x="1176" y="583.5" width="40" height="1" fill="#7e9de6"/><rect x="1176.5" y="554.5" width="39" height="39" fill="none" stroke="#7e9de6"/><rect x="1226" y="564" width="40" height="10" fill="#dfe2f5"/><rect x="1226" y="584" width="40" height="10" fill="#dfe2f5"/><rect x="1226" y="564" width="40" height="1" fill="#5563b4"/><rect x="1226" y="574" width="40" height="1" fill="#5563b4"/><rect x="1226" y="583.5" width="40" height="1" fill="#5563b4"/><rect x="1226.5" y="554.5" width="39" height="39" fill="none" stroke="#5563b4"/><rect x="1276" y="564" width="40" height="10" fill="#fde3e3"/><rect x="1276" y="584" width="40" height="10" fill="#fde3e3"/><rect x="1276" y="564" width="40" height="1" fill="#f0a4a4"/><rect x="1276" y="574" width="40" height="1" fill="#f0a4a4"/><rect x="1276" y="583.5" width="40" height="1" fill="#f0a4a4"/><rect x="1276.5" y="554.5" width="39" height="39" fill="none" stroke="#f0a4a4"/><rect x="1326" y="564" width="40" height="10" fill="#fff0d6"/><rect x="1326" y="584" width="40" height="10" fill="#fff0d6"/><rect x="1326" y="564" width="40" height="1" fill="#f4d78c"/><rect x="1326" y="574" width="40" height="1" fill="#f4d78c"/><rect x="1326" y="583.5" width="40" height="1" fill="#f4d78c"/><rect x="1326.5" y="554.5" width="39" height="39" fill="none" stroke="#f4d78c"/><rect x="1376" y="564" width="40" height="10" fill="#e5effe"/><rect x="1376" y="584" width="40" height="10" fill="#e5effe"/><rect x="1376" y="564" width="40" height="1" fill="#a6c6ee"/><rect x="1376" y="574" width="40" height="1" fill="#a6c6ee"/><rect x="1376" y="583.5" width="40" height="1" fill="#a6c6ee"/><rect x="1376.5" y="554.5" width="39" height="39" fill="none" stroke="#a6c6ee"/><rect x="1426" y="564" width="40" height="10" fill="#e5e7fc"/><rect x="1426" y="584" width="40" height="10" fill="#e5e7fc"/><rect x="1426" y="564" width="40" height="1" fill="#969fe0"/><rect x="1426" y="574" width="40" height="1" fill="#969fe0"/><rect x="1426" y="583.5" width="40" height="1" fill="#969fe0"/><rect x="1426.5" y="554.5" width="39" height="39" fill="none" stroke="#969fe0"/><rect x="1126" y="649" width="40" height="11" fill="#000000"/><rect x="1126" y="660" width="40" height="9" fill="#e4e4e4"/><rect x="1126" y="679" width="40" height="10" fill="#e4e4e4"/><rect x="1126" y="669" width="40" height="1" fill="#000000"/><rect x="1126" y="679" width="40" height="1" fill="#000000"/><rect x="1126.5" y="649.5" width="39" height="39" fill="none" stroke="#000000"/><rect x="1176" y="649" width="40" height="11" fill="#3f78ee"/><rect x="1176" y="660" width="40" height="9" fill="#e3e8fc"/><rect x="1176" y="679" width="40" height="10" fill="#e3e8fc"/><rect x="1176" y="669" width="40" height="1" fill="#7e9de6"/><rect x="1176" y="679" width="40" height="1" fill="#7e9de6"/><rect x="1176.5" y="649.5" width="39" height="39" fill="none" stroke="#7e9de6"/><rect x="1226" y="649" width="40" height="11" fill="#3c4fb8"/><rect x="1226" y="660" width="40" height="9" fill="#dfe2f5"/><rect x="1226" y="679" width="40" height="10" fill="#dfe2f5"/><rect x="1226" y="669" width="40" height="1" fill="#5563b4"/><rect x="1226" y="679" width="40" height="1" fill="#5563b4"/><rect x="1226.5" y="649.5" width="39" height="39" fill="none" stroke="#5563b4"/><rect x="1276" y="649" width="40" height="11" fill="#f46a6a"/><rect x="1276" y="660" width="40" height="9" fill="#fde3e3"/><rect x="1276" y="679" width="40" height="10" fill="#fde3e3"/><rect x="1276" y="669" width="40" height="1" fill="#f0a4a4"/><rect x="1276" y="679" width="40" height="1" fill="#f0a4a4"/><rect x="1276.5" y="649.5" width="39" height="39" fill="none" stroke="#f0a4a4"/><rect x="1326" y="649" width="40" height="11" fill="#fec44a"/><rect x="1326" y="660" width="40" height="9" fill="#fff0d6"/><rect x="1326" y="679" width="40" height="10" fill="#fff0d6"/><rect x="1326" y="669" width="40" height="1" fill="#f4d78c"/><rect x="1326" y="679" width="40" height="1" fill="#f4d78c"/><rect x="1326.5" y="649.5" width="39" height="39" fill="none" stroke="#f4d78c"/><rect x="1376" y="649" width="40" height="11" fill="#7ab6f5"/><rect x="1376" y="660" width="40" height="9" fill="#e5effe"/><rect x="1376" y="679" width="40" height="10" fill="#e5effe"/><rect x="1376" y="669" width="40" height="1" fill="#a6c6ee"/><rect x="1376" y="679" width="40" height="1" fill="#a6c6ee"/><rect x="1376.5" y="649.5" width="39" height="39" fill="none" stroke="#a6c6ee"/><rect x="1426" y="649" width="40" height="11" fill="#6a7cec"/><rect x="1426" y="660" width="40" height="9" fill="#e5e7fc"/><rect x="1426" y="679" width="40" height="10" fill="#e5e7fc"/><rect x="1426" y="669" width="40" height="1" fill="#969fe0"/><rect x="1426" y="679" width="40" height="1" fill="#969fe0"/><rect x="1426.5" y="649.5" width="39" height="39" fill="none" stroke="#969fe0"/><rect x="1126.5" y="699.6" width="9" height="8.7" fill="#000000"/><rect x="1136.4" y="699.6" width="9" height="8.7" fill="#000000"/><rect x="1146.3" y="699.6" width="9" height="8.7" fill="#000000"/><rect x="1156.2" y="699.6" width="9" height="8.7" fill="#000000"/><rect x="1126.5" y="709.2" width="9" height="8.7" fill="#c8c8c8"/><rect x="1136.4" y="709.2" width="9" height="8.7" fill="#c8c8c8"/><rect x="1146.3" y="709.2" width="9" height="8.7" fill="#c8c8c8"/><rect x="1156.2" y="709.2" width="9" height="8.7" fill="#c8c8c8"/><rect x="1126.5" y="718.9" width="9" height="8.7" fill="#e4e4e4"/><rect x="1136.4" y="718.9" width="9" height="8.7" fill="#e4e4e4"/><rect x="1146.3" y="718.9" width="9" height="8.7" fill="#e4e4e4"/><rect x="1156.2" y="718.9" width="9" height="8.7" fill="#e4e4e4"/><rect x="1126.5" y="728.5" width="9" height="8.7" fill="#c8c8c8"/><rect x="1136.4" y="728.5" width="9" height="8.7" fill="#c8c8c8"/><rect x="1146.3" y="728.5" width="9" height="8.7" fill="#c8c8c8"/><rect x="1156.2" y="728.5" width="9" height="8.7" fill="#c8c8c8"/><rect x="1176.5" y="699.6" width="9" height="8.7" fill="#3f78ee"/><rect x="1186.4" y="699.6" width="9" height="8.7" fill="#3f78ee"/><rect x="1196.3" y="699.6" width="9" height="8.7" fill="#3f78ee"/><rect x="1206.2" y="699.6" width="9" height="8.7" fill="#3f78ee"/><rect x="1176.5" y="709.2" width="9" height="8.7" fill="#d0d8fa"/><rect x="1186.4" y="709.2" width="9" height="8.7" fill="#d0d8fa"/><rect x="1196.3" y="709.2" width="9" height="8.7" fill="#d0d8fa"/><rect x="1206.2" y="709.2" width="9" height="8.7" fill="#d0d8fa"/><rect x="1176.5" y="718.9" width="9" height="8.7" fill="#e3e8fc"/><rect x="1186.4" y="718.9" width="9" height="8.7" fill="#e3e8fc"/><rect x="1196.3" y="718.9" width="9" height="8.7" fill="#e3e8fc"/><rect x="1206.2" y="718.9" width="9" height="8.7" fill="#e3e8fc"/><rect x="1176.5" y="728.5" width="9" height="8.7" fill="#d0d8fa"/><rect x="1186.4" y="728.5" width="9" height="8.7" fill="#d0d8fa"/><rect x="1196.3" y="728.5" width="9" height="8.7" fill="#d0d8fa"/><rect x="1206.2" y="728.5" width="9" height="8.7" fill="#d0d8fa"/><rect x="1226.5" y="699.6" width="9" height="8.7" fill="#3c4fb8"/><rect x="1236.4" y="699.6" width="9" height="8.7" fill="#3c4fb8"/><rect x="1246.3" y="699.6" width="9" height="8.7" fill="#3c4fb8"/><rect x="1256.2" y="699.6" width="9" height="8.7" fill="#3c4fb8"/><rect x="1226.5" y="709.2" width="9" height="8.7" fill="#cfd2ee"/><rect x="1236.4" y="709.2" width="9" height="8.7" fill="#cfd2ee"/><rect x="1246.3" y="709.2" width="9" height="8.7" fill="#cfd2ee"/><rect x="1256.2" y="709.2" width="9" height="8.7" fill="#cfd2ee"/><rect x="1226.5" y="718.9" width="9" height="8.7" fill="#dfe2f5"/><rect x="1236.4" y="718.9" width="9" height="8.7" fill="#dfe2f5"/><rect x="1246.3" y="718.9" width="9" height="8.7" fill="#dfe2f5"/><rect x="1256.2" y="718.9" width="9" height="8.7" fill="#dfe2f5"/><rect x="1226.5" y="728.5" width="9" height="8.7" fill="#cfd2ee"/><rect x="1236.4" y="728.5" width="9" height="8.7" fill="#cfd2ee"/><rect x="1246.3" y="728.5" width="9" height="8.7" fill="#cfd2ee"/><rect x="1256.2" y="728.5" width="9" height="8.7" fill="#cfd2ee"/><rect x="1276.5" y="699.6" width="9" height="8.7" fill="#f46a6a"/><rect x="1286.4" y="699.6" width="9" height="8.7" fill="#f46a6a"/><rect x="1296.3" y="699.6" width="9" height="8.7" fill="#f46a6a"/><rect x="1306.2" y="699.6" width="9" height="8.7" fill="#f46a6a"/><rect x="1276.5" y="709.2" width="9" height="8.7" fill="#fcd4d4"/><rect x="1286.4" y="709.2" width="9" height="8.7" fill="#fcd4d4"/><rect x="1296.3" y="709.2" width="9" height="8.7" fill="#fcd4d4"/><rect x="1306.2" y="709.2" width="9" height="8.7" fill="#fcd4d4"/><rect x="1276.5" y="718.9" width="9" height="8.7" fill="#fde3e3"/><rect x="1286.4" y="718.9" width="9" height="8.7" fill="#fde3e3"/><rect x="1296.3" y="718.9" width="9" height="8.7" fill="#fde3e3"/><rect x="1306.2" y="718.9" width="9" height="8.7" fill="#fde3e3"/><rect x="1276.5" y="728.5" width="9" height="8.7" fill="#fcd4d4"/><rect x="1286.4" y="728.5" width="9" height="8.7" fill="#fcd4d4"/><rect x="1296.3" y="728.5" width="9" height="8.7" fill="#fcd4d4"/><rect x="1306.2" y="728.5" width="9" height="8.7" fill="#fcd4d4"/><rect x="1326.5" y="699.6" width="9" height="8.7" fill="#fec44a"/><rect x="1336.4" y="699.6" width="9" height="8.7" fill="#fec44a"/><rect x="1346.3" y="699.6" width="9" height="8.7" fill="#fec44a"/><rect x="1356.2" y="699.6" width="9" height="8.7" fill="#fec44a"/><rect x="1326.5" y="709.2" width="9" height="8.7" fill="#fee8bc"/><rect x="1336.4" y="709.2" width="9" height="8.7" fill="#fee8bc"/><rect x="1346.3" y="709.2" width="9" height="8.7" fill="#fee8bc"/><rect x="1356.2" y="709.2" width="9" height="8.7" fill="#fee8bc"/><rect x="1326.5" y="718.9" width="9" height="8.7" fill="#fff0d6"/><rect x="1336.4" y="718.9" width="9" height="8.7" fill="#fff0d6"/><rect x="1346.3" y="718.9" width="9" height="8.7" fill="#fff0d6"/><rect x="1356.2" y="718.9" width="9" height="8.7" fill="#fff0d6"/><rect x="1326.5" y="728.5" width="9" height="8.7" fill="#fee8bc"/><rect x="1336.4" y="728.5" width="9" height="8.7" fill="#fee8bc"/><rect x="1346.3" y="728.5" width="9" height="8.7" fill="#fee8bc"/><rect x="1356.2" y="728.5" width="9" height="8.7" fill="#fee8bc"/><rect x="1376.5" y="699.6" width="9" height="8.7" fill="#7ab6f5"/><rect x="1386.4" y="699.6" width="9" height="8.7" fill="#7ab6f5"/><rect x="1396.3" y="699.6" width="9" height="8.7" fill="#7ab6f5"/><rect x="1406.2" y="699.6" width="9" height="8.7" fill="#7ab6f5"/><rect x="1376.5" y="709.2" width="9" height="8.7" fill="#d2e2fa"/><rect x="1386.4" y="709.2" width="9" height="8.7" fill="#d2e2fa"/><rect x="1396.3" y="709.2" width="9" height="8.7" fill="#d2e2fa"/><rect x="1406.2" y="709.2" width="9" height="8.7" fill="#d2e2fa"/><rect x="1376.5" y="718.9" width="9" height="8.7" fill="#e5effe"/><rect x="1386.4" y="718.9" width="9" height="8.7" fill="#e5effe"/><rect x="1396.3" y="718.9" width="9" height="8.7" fill="#e5effe"/><rect x="1406.2" y="718.9" width="9" height="8.7" fill="#e5effe"/><rect x="1376.5" y="728.5" width="9" height="8.7" fill="#d2e2fa"/><rect x="1386.4" y="728.5" width="9" height="8.7" fill="#d2e2fa"/><rect x="1396.3" y="728.5" width="9" height="8.7" fill="#d2e2fa"/><rect x="1406.2" y="728.5" width="9" height="8.7" fill="#d2e2fa"/><rect x="1426.5" y="699.6" width="9" height="8.7" fill="#6a7cec"/><rect x="1436.4" y="699.6" width="9" height="8.7" fill="#6a7cec"/><rect x="1446.3" y="699.6" width="9" height="8.7" fill="#6a7cec"/><rect x="1456.2" y="699.6" width="9" height="8.7" fill="#6a7cec"/><rect x="1426.5" y="709.2" width="9" height="8.7" fill="#d0d4f8"/><rect x="1436.4" y="709.2" width="9" height="8.7" fill="#d0d4f8"/><rect x="1446.3" y="709.2" width="9" height="8.7" fill="#d0d4f8"/><rect x="1456.2" y="709.2" width="9" height="8.7" fill="#d0d4f8"/><rect x="1426.5" y="718.9" width="9" height="8.7" fill="#e5e7fc"/><rect x="1436.4" y="718.9" width="9" height="8.7" fill="#e5e7fc"/><rect x="1446.3" y="718.9" width="9" height="8.7" fill="#e5e7fc"/><rect x="1456.2" y="718.9" width="9" height="8.7" fill="#e5e7fc"/><rect x="1426.5" y="728.5" width="9" height="8.7" fill="#d0d4f8"/><rect x="1436.4" y="728.5" width="9" height="8.7" fill="#d0d4f8"/><rect x="1446.3" y="728.5" width="9" height="8.7" fill="#d0d4f8"/><rect x="1456.2" y="728.5" width="9" height="8.7" fill="#d0d4f8"/><rect x="1126" y="749" width="40" height="11" fill="#000000"/><rect x="1126" y="760" width="40" height="9" fill="#ececec"/><rect x="1126" y="779" width="40" height="10" fill="#ececec"/><rect x="1126" y="769" width="40" height="1" fill="#000"/><rect x="1126" y="779" width="40" height="1" fill="#000"/><rect x="1136" y="760" width="1" height="29" fill="#000"/><rect x="1146" y="760" width="1" height="29" fill="#000"/><rect x="1155.5" y="760" width="1" height="29" fill="#000"/><rect x="1126.5" y="749.5" width="39" height="39" fill="none" stroke="#000"/><rect x="1176" y="750" width="40" height="10" fill="#3f78ee"/><rect x="1176" y="749" width="40" height="1.2" fill="#111"/><rect x="1176" y="759.5" width="40" height="1.2" fill="#111"/><rect x="1176" y="761" width="40" height="8" fill="#e8e8e8"/><rect x="1176" y="779" width="40" height="8.5" fill="#e8e8e8"/><rect x="1176" y="788" width="40" height="1.2" fill="#111"/><rect x="1226" y="750" width="40" height="10" fill="#3c4fb8"/><rect x="1226" y="749" width="40" height="1.2" fill="#111"/><rect x="1226" y="759.5" width="40" height="1.2" fill="#111"/><rect x="1226" y="761" width="40" height="8" fill="#e8e8e8"/><rect x="1226" y="779" width="40" height="8.5" fill="#e8e8e8"/><rect x="1226" y="788" width="40" height="1.2" fill="#111"/><rect x="1276" y="750" width="40" height="10" fill="#f46a6a"/><rect x="1276" y="749" width="40" height="1.2" fill="#111"/><rect x="1276" y="759.5" width="40" height="1.2" fill="#111"/><rect x="1276" y="761" width="40" height="8" fill="#e8e8e8"/><rect x="1276" y="779" width="40" height="8.5" fill="#e8e8e8"/><rect x="1276" y="788" width="40" height="1.2" fill="#111"/><rect x="1326" y="750" width="40" height="10" fill="#fec44a"/><rect x="1326" y="749" width="40" height="1.2" fill="#111"/><rect x="1326" y="759.5" width="40" height="1.2" fill="#111"/><rect x="1326" y="761" width="40" height="8" fill="#e8e8e8"/><rect x="1326" y="779" width="40" height="8.5" fill="#e8e8e8"/><rect x="1326" y="788" width="40" height="1.2" fill="#111"/><rect x="1376" y="750" width="40" height="10" fill="#7ab6f5"/><rect x="1376" y="749" width="40" height="1.2" fill="#111"/><rect x="1376" y="759.5" width="40" height="1.2" fill="#111"/><rect x="1376" y="761" width="40" height="8" fill="#e8e8e8"/><rect x="1376" y="779" width="40" height="8.5" fill="#e8e8e8"/><rect x="1376" y="788" width="40" height="1.2" fill="#111"/><rect x="1426" y="750" width="40" height="10" fill="#6a7cec"/><rect x="1426" y="749" width="40" height="1.2" fill="#111"/><rect x="1426" y="759.5" width="40" height="1.2" fill="#111"/><rect x="1426" y="761" width="40" height="8" fill="#e8e8e8"/><rect x="1426" y="779" width="40" height="8.5" fill="#e8e8e8"/><rect x="1426" y="788" width="40" height="1.2" fill="#111"/><rect x="1126" y="799" width="40" height="40" fill="#e4e4e4"/><rect x="1126" y="809" width="40" height="10" fill="#cfcfcf"/><rect x="1126" y="809" width="40" height="1" fill="#000000"/><rect x="1126" y="819" width="40" height="1" fill="#000000"/><rect x="1126" y="829" width="40" height="1" fill="#000000"/><rect x="1136" y="799" width="1" height="40" fill="#000000"/><rect x="1146" y="799" width="1" height="40" fill="#000000"/><rect x="1155.5" y="799" width="1" height="40" fill="#000000"/><rect x="1126.5" y="799.5" width="39" height="39" fill="none" stroke="#000000"/><rect x="1176" y="799" width="40" height="40" fill="#e3e8fc"/><rect x="1176" y="809" width="40" height="10" fill="#d0d8fa"/><rect x="1176" y="809" width="40" height="1" fill="#7e9de6"/><rect x="1176" y="819" width="40" height="1" fill="#7e9de6"/><rect x="1176" y="829" width="40" height="1" fill="#7e9de6"/><rect x="1186" y="799" width="1" height="40" fill="#7e9de6"/><rect x="1196" y="799" width="1" height="40" fill="#7e9de6"/><rect x="1205.5" y="799" width="1" height="40" fill="#7e9de6"/><rect x="1176.5" y="799.5" width="39" height="39" fill="none" stroke="#7e9de6"/><rect x="1226" y="799" width="40" height="40" fill="#dfe2f5"/><rect x="1226" y="809" width="40" height="10" fill="#cfd2ee"/><rect x="1226" y="809" width="40" height="1" fill="#5563b4"/><rect x="1226" y="819" width="40" height="1" fill="#5563b4"/><rect x="1226" y="829" width="40" height="1" fill="#5563b4"/><rect x="1236" y="799" width="1" height="40" fill="#5563b4"/><rect x="1246" y="799" width="1" height="40" fill="#5563b4"/><rect x="1255.5" y="799" width="1" height="40" fill="#5563b4"/><rect x="1226.5" y="799.5" width="39" height="39" fill="none" stroke="#5563b4"/><rect x="1276" y="799" width="40" height="40" fill="#fde3e3"/><rect x="1276" y="809" width="40" height="10" fill="#fcd4d4"/><rect x="1276" y="809" width="40" height="1" fill="#f0a4a4"/><rect x="1276" y="819" width="40" height="1" fill="#f0a4a4"/><rect x="1276" y="829" width="40" height="1" fill="#f0a4a4"/><rect x="1286" y="799" width="1" height="40" fill="#f0a4a4"/><rect x="1296" y="799" width="1" height="40" fill="#f0a4a4"/><rect x="1305.5" y="799" width="1" height="40" fill="#f0a4a4"/><rect x="1276.5" y="799.5" width="39" height="39" fill="none" stroke="#f0a4a4"/><rect x="1326" y="799" width="40" height="40" fill="#fff0d6"/><rect x="1326" y="809" width="40" height="10" fill="#fee8bc"/><rect x="1326" y="809" width="40" height="1" fill="#f4d78c"/><rect x="1326" y="819" width="40" height="1" fill="#f4d78c"/><rect x="1326" y="829" width="40" height="1" fill="#f4d78c"/><rect x="1336" y="799" width="1" height="40" fill="#f4d78c"/><rect x="1346" y="799" width="1" height="40" fill="#f4d78c"/><rect x="1355.5" y="799" width="1" height="40" fill="#f4d78c"/><rect x="1326.5" y="799.5" width="39" height="39" fill="none" stroke="#f4d78c"/><rect x="1376" y="799" width="40" height="40" fill="#e5effe"/><rect x="1376" y="809" width="40" height="10" fill="#d2e2fa"/><rect x="1376" y="809" width="40" height="1" fill="#a6c6ee"/><rect x="1376" y="819" width="40" height="1" fill="#a6c6ee"/><rect x="1376" y="829" width="40" height="1" fill="#a6c6ee"/><rect x="1386" y="799" width="1" height="40" fill="#a6c6ee"/><rect x="1396" y="799" width="1" height="40" fill="#a6c6ee"/><rect x="1405.5" y="799" width="1" height="40" fill="#a6c6ee"/><rect x="1376.5" y="799.5" width="39" height="39" fill="none" stroke="#a6c6ee"/><rect x="1426" y="799" width="40" height="40" fill="#e5e7fc"/><rect x="1426" y="809" width="40" height="10" fill="#d0d4f8"/><rect x="1426" y="809" width="40" height="1" fill="#969fe0"/><rect x="1426" y="819" width="40" height="1" fill="#969fe0"/><rect x="1426" y="829" width="40" height="1" fill="#969fe0"/><rect x="1436" y="799" width="1" height="40" fill="#969fe0"/><rect x="1446" y="799" width="1" height="40" fill="#969fe0"/><rect x="1455.5" y="799" width="1" height="40" fill="#969fe0"/><rect x="1426.5" y="799.5" width="39" height="39" fill="none" stroke="#969fe0"/></svg>
<div class="a" style="left:1481px;top:408px;width:6px;height:296px;border-radius:3px;background:#e2e2e4"></div>
<svg class="ic" style="left:1128px;top:842px" width="24" height="26" viewBox="0 0 24 26"><path d="M2 6h20M8 6V3.5a1.5 1.5 0 0 1 1.5-1.5h5A1.5 1.5 0 0 1 16 3.5V6M4.5 6v15.5A1.5 1.5 0 0 0 6 23h12a1.5 1.5 0 0 0 1.5-1.5V6M9.5 11v7.5M14.5 11v7.5" stroke-width="2.3"/></svg>
<div class="t" style="left:1162px;top:847px;font-size:15px;color:#222;height:15px;transform:scaleX(0.949);">Clear</div>
<div class="a" id="palette">
<div class="sw" style="left:43px;background:#b5152b"></div>
<div class="sw" style="left:59.8px;background:#d0173a"></div>
<div class="sw" style="left:76.7px;background:#e8455f"></div>
<div class="sw" style="left:93.5px;background:#f2688a"></div>
<div class="sw" style="left:110.4px;background:#f8a0b5"></div>
<div class="sw" style="left:127.2px;background:#2a7e8c"></div>
<div class="sw" style="left:144px;background:#38a3bb"></div>
<div class="sw" style="left:160.9px;background:#44bbd8"></div>
<div class="sw" style="left:177.7px;background:#62d4e4"></div>
<div class="sw" style="left:194.6px;background:#b0ecfc"></div>
<div class="sw" style="left:211.4px;background:#f05a28"></div>
<div class="sw" style="left:228.2px;background:#f9803a"></div>
<div class="sw" style="left:245.1px;background:#fb9a2a"></div>
<div class="sw" style="left:261.9px;background:#fdb62a"></div>
<div class="sw" style="left:278.8px;background:#fdc45a"></div>
<div class="sw" style="left:295.6px;background:#1f9477"></div>
<div class="sw" style="left:312.4px;background:#25ae90"></div>
<div class="sw" style="left:329.3px;background:#2bc5a4"></div>
<div class="sw" style="left:346.1px;background:#6bd7c0"></div>
<div class="sw" style="left:363px;background:#8ee8d4"></div>
<div class="sw" style="left:379.8px;background:#a82e62"></div>
<div class="sw" style="left:396.6px;background:#c84c86"></div>
<div class="sw" style="left:413.5px;background:#e0609c"></div>
<div class="sw" style="left:430.3px;background:#f48cc0"></div>
<div class="sw" style="left:447.2px;background:#f6c4dc"></div>
<div class="sw" style="left:464px;background:#6a921e"></div>
<div class="sw" style="left:480.8px;background:#7ea42c"></div>
<div class="sw" style="left:497.7px;background:#9aba2e"></div>
<div class="sw" style="left:514.5px;background:#b2cc58"></div>
<div class="sw" style="left:531.4px;background:#d4e08c"></div>
<div class="sw" style="left:548.2px;background:#2430a0"></div>
<div class="sw" style="left:565px;background:#3848c8"></div>
<div class="sw" style="left:581.9px;background:#6846dc"></div>
<div class="sw" style="left:598.7px;background:#9070e4"></div>
<div class="sw" style="left:615.6px;background:#a890f0"></div>
<div class="sw" style="left:632.4px;background:#fbc018"></div>
<div class="sw" style="left:649.2px;background:#fcd83c"></div>
<div class="sw" style="left:666.1px;background:#f0e034"></div>
<div class="sw" style="left:682.9px;background:#f8f050"></div>
<div class="sw" style="left:699.8px;background:#fcfc90"></div>
<div class="sw" style="left:716.6px;background:#a054d8"></div>
<div class="sw" style="left:733.4px;background:#b860dc"></div>
<div class="sw" style="left:750.3px;background:#c878ec"></div>
<div class="sw" style="left:767.1px;background:#c088f0"></div>
<div class="sw" style="left:784px;background:#dca8f8"></div>
<div class="sw" style="left:800.8px;background:#2c8048"></div>
<div class="sw" style="left:817.6px;background:#3a9c58"></div>
<div class="sw" style="left:834.5px;background:#48ac6c"></div>
<div class="sw" style="left:851.3px;background:#64bc84"></div>
<div class="sw" style="left:868.2px;background:#98d8ac"></div>
<div class="sw" style="left:885px;background:#e83830"></div>
<div class="sw" style="left:901.8px;background:#f04438"></div>
<div class="sw" style="left:918.7px;background:#f06060"></div>
<div class="sw" style="left:935.5px;background:#f88080"></div>
<div class="sw" style="left:952.4px;background:#fc9890"></div>
<div class="sw" style="left:969.2px;background:#2848a8"></div>
<div class="sw" style="left:986px;background:#3058c8"></div>
<div class="sw" style="left:1002.9px;background:#3868d8"></div>
<div class="sw" style="left:1019.7px;background:#6890ec"></div>
<div class="sw" style="left:1036.6px;background:#88acf4"></div>
<div class="sw" style="left:1053.4px;background:#8c3410"></div>
<div class="sw" style="left:1070.2px;background:#a84418"></div>
<div class="sw" style="left:1087.1px;background:#b44c28"></div>
<div class="sw" style="left:1103.9px;background:#d86840"></div>
<div class="sw" style="left:1120.8px;background:#e87858"></div>
<div class="sw" style="left:1137.6px;background:#1c90dc"></div>
<div class="sw" style="left:1154.4px;background:#2c9ce4"></div>
<div class="sw" style="left:1171.3px;background:#3cacf0"></div>
<div class="sw" style="left:1188.1px;background:#38c0f4"></div>
<div class="sw" style="left:1205px;background:#58d4fc"></div>
<div class="sw" style="left:1221.8px;background:#8c5838"></div>
<div class="sw" style="left:1238.6px;background:#a86840"></div>
<div class="sw" style="left:1255.5px;background:#bc7850"></div>
<div class="sw" style="left:1272.3px;background:#dc9068"></div>
<div class="sw" style="left:1289.2px;background:#f0a078"></div>
<div class="sw" style="left:1306px;background:#988c80"></div>
<div class="sw" style="left:1322.8px;background:#b8b49c"></div>
<div class="sw" style="left:1339.7px;background:#d0ccb4"></div>
<div class="sw" style="left:1356.5px;background:#e8e4d4"></div>
<div class="sw" style="left:1373.4px;background:#f0ece0"></div>
<div class="sw" style="left:1390.2px;background:#202020"></div>
<div class="sw" style="left:1407px;background:#303030"></div>
<div class="sw" style="left:1423.9px;background:#484848"></div>
<div class="sw" style="left:1440.7px;background:#585858"></div>
<div class="sw" style="left:1457.6px;background:#787878"></div>
<div class="sw" style="left:1474.4px;background:#b0b0b0"></div>
<div class="sw" style="left:1491.2px;background:#c8c8c8"></div>
<div class="sw" style="left:1508.1px;background:#e0e0e0"></div>
<div class="sw" style="left:1524.9px;background:#ececec"></div>
<div class="sw" style="left:1541.8px;background:#f8f8f8"></div>
</div>
<svg class="ic" style="left:359px;top:961px" width="18" height="18" viewBox="0 0 18 18"><path d="M3 9l5.5-6 6 5.5-5 5.5a1.4 1.4 0 0 1-2 0L3.2 11a1.4 1.4 0 0 1-.200-2ZM8.5 3L6 .800" stroke-width="1.6"/><path d="M3.5 9.5h10.5l-4.5 5a1.4 1.4 0 0 1-2 0Z" fill="#2a2a2e" stroke="none"/><circle cx="15.5" cy="14.5" r="1.3" fill="#2a2a2e" stroke="none"/></svg>
<div class="dd" style="left:376.5px;top:968px"></div>
<div class="a" id="status"></div>
<div class="a" style="left:60px;top:985px;width:1px;height:30px;background:#dcdce6"></div>
<div class="a" style="left:210px;top:985px;width:1px;height:30px;background:#dcdce6"></div>
<div class="a" style="left:270px;top:985px;width:1px;height:30px;background:#dcdce6"></div>
<div class="a" style="left:370px;top:985px;width:1px;height:30px;background:#dcdce6"></div>
<div class="a" style="left:1139px;top:985px;width:1px;height:30px;background:#dcdce6"></div>
<div class="a" style="left:1295px;top:985px;width:1px;height:30px;background:#dcdce6"></div>
<div class="a" style="left:1406px;top:985px;width:1px;height:30px;background:#dcdce6"></div>
<svg class="ic" style="left:21px;top:991px" width="30" height="18" viewBox="0 0 30 18"><rect x="6" y="1.5" width="18" height="15" stroke-width="2"/><path d="M1.5 2v14M28.5 2v14" stroke-width="2" stroke="#666"/></svg>
<div class="t" style="left:70px;top:992.5px;font-size:15px;color:#222;height:15px;transform:scaleX(0.972);">Page-1</div>
<div class="dd" style="left:193.5px;top:998px;border-top-color:#80808c"></div>
<svg class="ic" style="left:232px;top:993px" width="15" height="15" viewBox="0 0 15 15"><path d="M7.5 1.5v12M1.5 7.5h12" stroke-width="2"/></svg>
<div class="t" style="left:296px;top:992.5px;font-size:15px;color:#1a7ae0;height:15px;font-weight:bold;transform:scaleX(0.976);">Page-1</div>
<div class="t" style="left:1150px;top:992.5px;font-size:15px;color:#222;height:15px;transform:scaleX(0.977);">Number of shapes: 5</div>
<div class="t" style="left:1306px;top:992.5px;font-size:15px;color:#222;height:15px;transform:scaleX(0.938);">Shape ID: 101</div>
<svg class="ic" style="left:1420px;top:990px" width="24" height="22" viewBox="0 0 24 22"><path d="M12 2l10 6-10 6L2 8Z" stroke-width="1.9"/><path d="M3 13.5l9 5.5 9-5.5" stroke-width="1.9"/></svg>
<svg class="ic" style="left:1467px;top:990px" width="24" height="22" viewBox="0 0 24 22"><path d="M2 6V2h4.5M17 2h4.5v4M2 15.5v4h4.5M21.5 15.5v4H17" stroke-width="2"/><rect x="7" y="6.5" width="9.5" height="8.5" fill="#555" stroke="none"/></svg>
<div class="t" style="left:1497px;top:992.5px;font-size:15px;color:#222;height:15px;transform:scaleX(0.906);">Focus</div>
<svg class="ic" style="left:1554px;top:989px" width="24" height="24" viewBox="0 0 24 24"><circle cx="11.5" cy="11.5" r="9.5" stroke-width="1.8"/><path d="M9 7.5l6 4-6 4Z" stroke-width="1.6"/></svg>
<div class="t" style="left:1595px;top:992.5px;font-size:15px;color:#222;height:15px;transform:scaleX(0.933);">75%</div>
<div class="dd ddg" style="left:1632px;top:999px"></div>
<svg class="ic" style="left:1652px;top:993px" width="14" height="14" viewBox="0 0 14 14"><path d="M1.5 7h11" stroke-width="1.9"/></svg>
<div class="a" style="left:1676px;top:999px;width:17px;height:2.5px;background:#222"></div>
<div class="a" style="left:1705px;top:999.5px;width:90px;height:1.5px;background:#f4f4f8"></div>
<div class="a" style="left:1692px;top:993px;width:14px;height:14px;border-radius:50%;border:2px solid #222;background:#fff"></div>
<svg class="ic" style="left:1802px;top:993px" width="15" height="15" viewBox="0 0 15 15"><path d="M7.5 1.5v12M1.5 7.5h12" stroke-width="1.9"/></svg>
<svg class="ic" style="left:1835px;top:989px" width="22" height="22" viewBox="0 0 22 22"><path d="M2 7.5V2h5.5M14.5 2H20v5.5M2 14.5V20h5.5M20 14.5V20h-5.5" stroke-width="2.2"/></svg>
<svg class="ic" style="left:1874px;top:989px" width="24" height="22" viewBox="0 0 24 22"><rect x="2" y="2" width="19" height="18" rx="1.5" stroke-width="2"/><path d="M6 11h11M8.5 8.5L6 11l2.5 2.5M14.5 8.5L17 11l-2.5 2.5" stroke-width="1.7"/></svg>
</body></html>
